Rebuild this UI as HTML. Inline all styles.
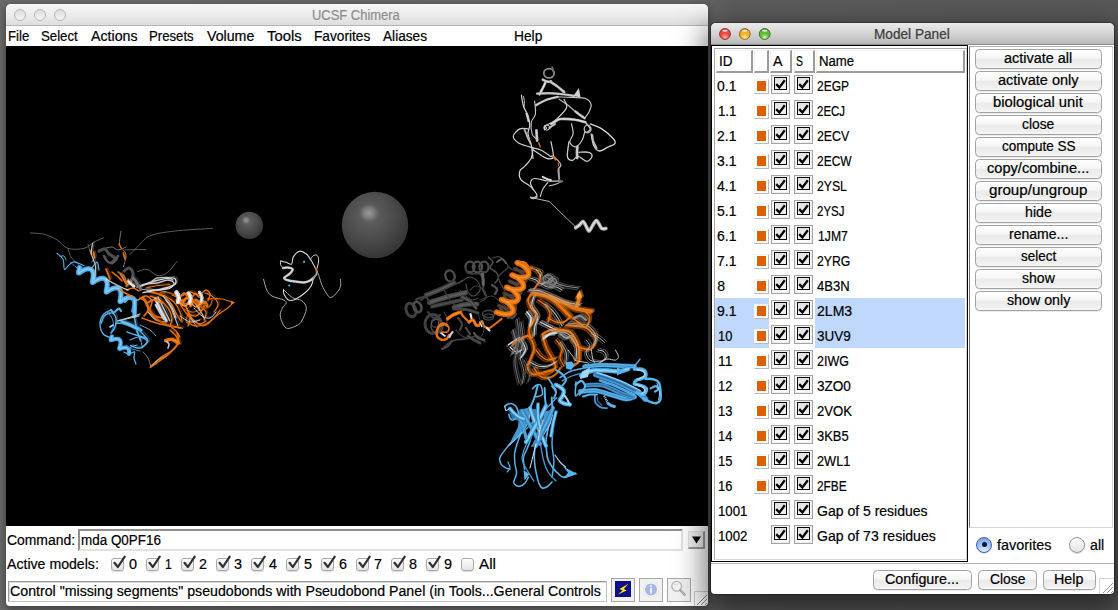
<!DOCTYPE html>
<html><head><meta charset="utf-8"><title>UCSF Chimera</title>
<style>
html,body{margin:0;padding:0;}
body{width:1118px;height:610px;overflow:hidden;position:relative;background:#5d5d5d;font-family:"Liberation Sans",sans-serif;}
.a{position:absolute;box-sizing:border-box;}
.t{position:absolute;white-space:pre;line-height:1;transform-origin:0 0;font-family:"Liberation Sans",sans-serif;-webkit-text-stroke:0.2px currentColor;}
#bg{left:0;top:0;width:1118px;height:610px;background:linear-gradient(90deg,#6a6a6a 0,#676767 690px,#5b5b5b 735px,#585858 100%);}
/* main window */
#w1{left:6px;top:4px;width:702px;height:602px;border-radius:5px 5px 4px 4px;background:#fff;box-shadow:0 3px 9px 1px rgba(0,0,0,.38);overflow:hidden;}
#w1 .tb{left:0;top:0;width:702px;height:22px;background:linear-gradient(#f7f7f7,#ececec 50%,#dedede);border-bottom:1px solid #b4b4b4;}
.tl{width:12px;height:12px;border-radius:50%;}
.tl.off{border:1px solid #b7b7b7;background:linear-gradient(#dcdcdc,#f4f4f4);}
#cv{left:0;top:42px;width:702px;height:480px;background:#000;}
/* model panel */
#w2{left:711px;top:23px;width:403px;height:571px;border-radius:5px 5px 4px 4px;background:#fff;box-shadow:0 12px 28px 8px rgba(0,0,0,.5),0 0 0 1px rgba(0,0,0,.3);}
#w2 .tb{left:0;top:0;width:403px;height:22px;border-radius:5px 5px 0 0;background:linear-gradient(#ebebeb,#d4d4d4 50%,#b8b8b8);border-bottom:1px solid #8c8c8c;}
.btn{border:1px solid #a2a2a2;border-radius:4.5px;background:linear-gradient(#ffffff 0,#f6f6f6 45%,#ebebeb 52%,#efefef 85%,#f8f8f8 100%);box-shadow:0 1px 0 rgba(0,0,0,.08);}
.hc{background:#fff;border-right:2px solid #9c9c9c;border-bottom:2px solid #9c9c9c;border-top:1px solid #f2f2f2;border-left:1px solid #f2f2f2;}
.cw{width:15px;height:15px;background:#fff;border-right:1px solid #b9b9b9;border-bottom:1px solid #b9b9b9;border-top:1px solid #f4f4f4;border-left:1px solid #f4f4f4;}
.cw i{position:absolute;left:2px;top:1.8px;width:9.8px;height:9.5px;background:#dc5f00;}
.cb{width:19px;height:19px;border:1px solid #a4a4a4;background:#fcfcfc;box-shadow:inset 0 0 0 1px #efefef;}
.cb i{position:absolute;left:2px;top:1px;width:13px;height:13px;box-sizing:border-box;border:1.4px solid #0a0a0a;background:linear-gradient(#e2e2e2,#efefef);}
.cb svg{position:absolute;left:2px;top:1px;}
.mcb{width:13px;height:13px;border:1px solid #a9a9a9;border-radius:3px;background:linear-gradient(#fdfdfd,#e4e4e4);box-shadow:0 1px 1px rgba(0,0,0,.15);}
.mcb svg{position:absolute;left:1px;top:-4px;}
</style></head><body>
<div id="bg" class="a"></div>
<!-- ================= main window ================= -->
<div id="w1" class="a">
 <div class="tb a"></div>
 <div class="tl off a" style="left:8.0px;top:5px"></div>
 <div class="tl off a" style="left:27.8px;top:5px"></div>
 <div class="tl off a" style="left:47.7px;top:5px"></div>
 <div id="cv" class="a"></div>
 <div class="a" style="left:72px;top:525px;width:605px;height:22px;background:#fff;border:2px solid #e1e1e1;border-top-color:#8f8f8f;border-left-color:#8f8f8f;"></div>
 <div class="a" style="left:682px;top:527px;width:17px;height:18px;background:#f2f2f2;border-top:1px solid #e4e4e4;border-left:1px solid #e4e4e4;border-right:2px solid #9b9b9b;border-bottom:2px solid #9b9b9b;"><svg width="14" height="15" style="position:absolute;left:0;top:0"><path d="M3 4.5h9L7.5 11.5z" fill="#000"/></svg></div>
 <div class="mcb a" style="left:104.5px;top:553.5px"><svg width="16" height="16" viewBox="0 0 16 16"><path d="M1.5 7.8L4.9 12 11.7 1.7" fill="none" stroke="#303030" stroke-width="2.2" stroke-linecap="round" stroke-linejoin="round"/></svg></div>
 <div class="mcb a" style="left:139.5px;top:553.5px"><svg width="16" height="16" viewBox="0 0 16 16"><path d="M1.5 7.8L4.9 12 11.7 1.7" fill="none" stroke="#303030" stroke-width="2.2" stroke-linecap="round" stroke-linejoin="round"/></svg></div>
 <div class="mcb a" style="left:174.5px;top:553.5px"><svg width="16" height="16" viewBox="0 0 16 16"><path d="M1.5 7.8L4.9 12 11.7 1.7" fill="none" stroke="#303030" stroke-width="2.2" stroke-linecap="round" stroke-linejoin="round"/></svg></div>
 <div class="mcb a" style="left:209.5px;top:553.5px"><svg width="16" height="16" viewBox="0 0 16 16"><path d="M1.5 7.8L4.9 12 11.7 1.7" fill="none" stroke="#303030" stroke-width="2.2" stroke-linecap="round" stroke-linejoin="round"/></svg></div>
 <div class="mcb a" style="left:244.5px;top:553.5px"><svg width="16" height="16" viewBox="0 0 16 16"><path d="M1.5 7.8L4.9 12 11.7 1.7" fill="none" stroke="#303030" stroke-width="2.2" stroke-linecap="round" stroke-linejoin="round"/></svg></div>
 <div class="mcb a" style="left:279.5px;top:553.5px"><svg width="16" height="16" viewBox="0 0 16 16"><path d="M1.5 7.8L4.9 12 11.7 1.7" fill="none" stroke="#303030" stroke-width="2.2" stroke-linecap="round" stroke-linejoin="round"/></svg></div>
 <div class="mcb a" style="left:314.5px;top:553.5px"><svg width="16" height="16" viewBox="0 0 16 16"><path d="M1.5 7.8L4.9 12 11.7 1.7" fill="none" stroke="#303030" stroke-width="2.2" stroke-linecap="round" stroke-linejoin="round"/></svg></div>
 <div class="mcb a" style="left:349.5px;top:553.5px"><svg width="16" height="16" viewBox="0 0 16 16"><path d="M1.5 7.8L4.9 12 11.7 1.7" fill="none" stroke="#303030" stroke-width="2.2" stroke-linecap="round" stroke-linejoin="round"/></svg></div>
 <div class="mcb a" style="left:384.5px;top:553.5px"><svg width="16" height="16" viewBox="0 0 16 16"><path d="M1.5 7.8L4.9 12 11.7 1.7" fill="none" stroke="#303030" stroke-width="2.2" stroke-linecap="round" stroke-linejoin="round"/></svg></div>
 <div class="mcb a" style="left:419.5px;top:553.5px"><svg width="16" height="16" viewBox="0 0 16 16"><path d="M1.5 7.8L4.9 12 11.7 1.7" fill="none" stroke="#303030" stroke-width="2.2" stroke-linecap="round" stroke-linejoin="round"/></svg></div>
 <div class="mcb a" style="left:454.5px;top:553.5px"></div>
 <div class="a" style="left:2px;top:577px;width:599px;height:21px;background:#fff;border:1px solid #9a9a9a;border-bottom-color:#c4c4c4;border-right-color:#c4c4c4;box-shadow:inset 1px 1px 0 #d8d8d8;"></div>
 <div class="a" style="left:605px;top:574px;width:24px;height:24px;background:#f1f1f1;border:1px solid #a8a8a8;"></div>
 <div class="a" style="left:633px;top:574px;width:24px;height:24px;background:#f1f1f1;border:1px solid #a8a8a8;"></div>
 <div class="a" style="left:661px;top:574px;width:24px;height:24px;background:#f1f1f1;border:1px solid #a8a8a8;"></div>
 <div class="a" style="left:609px;top:577px;width:16px;height:16px;background:#0d0d8a;"><svg width="16" height="16" viewBox="0 0 16 16" style="position:absolute;left:0;top:0"><path d="M13.4 2.8L4.4 8 7.6 9.4 2.8 13.6 11.8 9.4 8.8 8z" fill="#f8e800"/></svg></div>
 <svg class="a" style="left:634.7px;top:575.5px" width="20" height="20" viewBox="0 0 20 20"><circle cx="10" cy="9.5" r="8" fill="#e6e6e6"/><circle cx="10" cy="9.5" r="7.2" fill="#fafafa"/><circle cx="10" cy="9.5" r="6.1" fill="#a6b6e8"/><circle cx="10" cy="6.2" r="1.1" fill="#f6f8ff"/><rect x="9" y="8.1" width="2" height="5.2" fill="#f6f8ff"/></svg>
 <svg class="a" style="left:662px;top:574px" width="22" height="22" viewBox="0 0 22 22"><circle cx="8.7" cy="8.3" r="4.9" fill="#f3f3f3" stroke="#b4b4b4" stroke-width="1.3"/><path d="M12.4 12.2L16.6 16.6" stroke="#9c9c9c" stroke-width="2.3" stroke-linecap="round"/><path d="M12.9 12.7L16.2 16.2" stroke="#d8d8d8" stroke-width=".8" stroke-linecap="round"/><path d="M6 6.3h4" stroke="#cfcfcf" stroke-width=".9"/></svg>
 <div class="a" style="left:688px;top:587px;width:14px;height:15px;border-left:1px solid #d0d0d0;border-top:1px solid #d0d0d0;background:rgba(255,255,255,.25)"></div><svg class="a" style="left:688px;top:588px" width="14" height="14"><path d="M13 3L3 13M13 7L7 13M13 11L11 13" stroke="#8a8a8a" stroke-width="1"/></svg>
</div>
<!-- ================= model panel ================= -->
<div id="w2" class="a">
 <div class="tb a"></div>
 <svg class="a" style="left:0;top:0" width="80" height="22" viewBox="0 0 80 22"><defs><radialGradient id="tlr" cx=".5" cy=".82" r=".75"><stop offset="0" stop-color="#ffb3ae"/><stop offset=".5" stop-color="#ee4a44"/><stop offset=".88" stop-color="#ee4a44"/><stop offset="1" stop-color="#8f1f1c"/></radialGradient><radialGradient id="tly" cx=".5" cy=".82" r=".75"><stop offset="0" stop-color="#ffeea0"/><stop offset=".5" stop-color="#f0ae30"/><stop offset=".88" stop-color="#f0ae30"/><stop offset="1" stop-color="#96600e"/></radialGradient><radialGradient id="tlg" cx=".5" cy=".82" r=".75"><stop offset="0" stop-color="#d2f3b0"/><stop offset=".5" stop-color="#62ba3c"/><stop offset=".88" stop-color="#62ba3c"/><stop offset="1" stop-color="#2f6e18"/></radialGradient></defs><circle cx="14" cy="11" r="5.4" fill="url(#tlr)" stroke="#8f1f1c" stroke-width=".9"/><ellipse cx="14" cy="7.6" rx="2.7" ry="1.2" fill="#fff" opacity=".75"/><circle cx="33.8" cy="11" r="5.4" fill="url(#tly)" stroke="#96600e" stroke-width=".9"/><ellipse cx="33.8" cy="7.6" rx="2.7" ry="1.2" fill="#fff" opacity=".75"/><circle cx="53.7" cy="11" r="5.4" fill="url(#tlg)" stroke="#2f6e18" stroke-width=".9"/><ellipse cx="53.7" cy="7.6" rx="2.7" ry="1.2" fill="#fff" opacity=".75"/></svg>
 <div class="a" style="left:0;top:22px;width:257px;height:517px;border:1px solid #000;border-left-width:1.5px;background:#fff;"></div>
 <div class="a" style="left:2.5px;top:25px;width:253px;height:512px;border:1.5px solid #a9a9a9;border-right-color:#d6d6d6;border-bottom-color:#d6d6d6;background:#fff;"></div>
 <div class="hc a" style="left:5px;top:27px;width:37px;height:23px"></div>
 <div class="hc a" style="left:43px;top:27px;width:14.5px;height:23px"></div>
 <div class="hc a" style="left:58.5px;top:27px;width:22.5px;height:23px"></div>
 <div class="hc a" style="left:82.5px;top:27px;width:21.5px;height:23px"></div>
 <div class="hc a" style="left:105px;top:27px;width:148.5px;height:23px"></div>
 <div class="a" style="left:4px;top:275px;width:54px;height:50px;background:#bfd8fb"></div>
 <div class="a" style="left:104px;top:275px;width:149.5px;height:50px;background:#bfd8fb"></div>
 <div class="cw a" style="left:42.5px;top:55.5px"><i></i></div>
 <div class="cb a" style="left:60px;top:52px"><i></i><svg width="13" height="13" viewBox="0 0 13 13"><path d="M2.2 7.1L5.4 10.4 10.8 3.3" fill="none" stroke="#000" stroke-width="2.3" stroke-linejoin="miter"/></svg></div>
 <div class="cb a" style="left:83px;top:52px"><i></i><svg width="13" height="13" viewBox="0 0 13 13"><path d="M2.2 7.1L5.4 10.4 10.8 3.3" fill="none" stroke="#000" stroke-width="2.3" stroke-linejoin="miter"/></svg></div>
 <div class="cw a" style="left:42.5px;top:80.5px"><i></i></div>
 <div class="cb a" style="left:60px;top:77px"><i></i><svg width="13" height="13" viewBox="0 0 13 13"><path d="M2.2 7.1L5.4 10.4 10.8 3.3" fill="none" stroke="#000" stroke-width="2.3" stroke-linejoin="miter"/></svg></div>
 <div class="cb a" style="left:83px;top:77px"><i></i><svg width="13" height="13" viewBox="0 0 13 13"><path d="M2.2 7.1L5.4 10.4 10.8 3.3" fill="none" stroke="#000" stroke-width="2.3" stroke-linejoin="miter"/></svg></div>
 <div class="cw a" style="left:42.5px;top:105.5px"><i></i></div>
 <div class="cb a" style="left:60px;top:102px"><i></i><svg width="13" height="13" viewBox="0 0 13 13"><path d="M2.2 7.1L5.4 10.4 10.8 3.3" fill="none" stroke="#000" stroke-width="2.3" stroke-linejoin="miter"/></svg></div>
 <div class="cb a" style="left:83px;top:102px"><i></i><svg width="13" height="13" viewBox="0 0 13 13"><path d="M2.2 7.1L5.4 10.4 10.8 3.3" fill="none" stroke="#000" stroke-width="2.3" stroke-linejoin="miter"/></svg></div>
 <div class="cw a" style="left:42.5px;top:130.5px"><i></i></div>
 <div class="cb a" style="left:60px;top:127px"><i></i><svg width="13" height="13" viewBox="0 0 13 13"><path d="M2.2 7.1L5.4 10.4 10.8 3.3" fill="none" stroke="#000" stroke-width="2.3" stroke-linejoin="miter"/></svg></div>
 <div class="cb a" style="left:83px;top:127px"><i></i><svg width="13" height="13" viewBox="0 0 13 13"><path d="M2.2 7.1L5.4 10.4 10.8 3.3" fill="none" stroke="#000" stroke-width="2.3" stroke-linejoin="miter"/></svg></div>
 <div class="cw a" style="left:42.5px;top:155.5px"><i></i></div>
 <div class="cb a" style="left:60px;top:152px"><i></i><svg width="13" height="13" viewBox="0 0 13 13"><path d="M2.2 7.1L5.4 10.4 10.8 3.3" fill="none" stroke="#000" stroke-width="2.3" stroke-linejoin="miter"/></svg></div>
 <div class="cb a" style="left:83px;top:152px"><i></i><svg width="13" height="13" viewBox="0 0 13 13"><path d="M2.2 7.1L5.4 10.4 10.8 3.3" fill="none" stroke="#000" stroke-width="2.3" stroke-linejoin="miter"/></svg></div>
 <div class="cw a" style="left:42.5px;top:180.5px"><i></i></div>
 <div class="cb a" style="left:60px;top:177px"><i></i><svg width="13" height="13" viewBox="0 0 13 13"><path d="M2.2 7.1L5.4 10.4 10.8 3.3" fill="none" stroke="#000" stroke-width="2.3" stroke-linejoin="miter"/></svg></div>
 <div class="cb a" style="left:83px;top:177px"><i></i><svg width="13" height="13" viewBox="0 0 13 13"><path d="M2.2 7.1L5.4 10.4 10.8 3.3" fill="none" stroke="#000" stroke-width="2.3" stroke-linejoin="miter"/></svg></div>
 <div class="cw a" style="left:42.5px;top:205.5px"><i></i></div>
 <div class="cb a" style="left:60px;top:202px"><i></i><svg width="13" height="13" viewBox="0 0 13 13"><path d="M2.2 7.1L5.4 10.4 10.8 3.3" fill="none" stroke="#000" stroke-width="2.3" stroke-linejoin="miter"/></svg></div>
 <div class="cb a" style="left:83px;top:202px"><i></i><svg width="13" height="13" viewBox="0 0 13 13"><path d="M2.2 7.1L5.4 10.4 10.8 3.3" fill="none" stroke="#000" stroke-width="2.3" stroke-linejoin="miter"/></svg></div>
 <div class="cw a" style="left:42.5px;top:230.5px"><i></i></div>
 <div class="cb a" style="left:60px;top:227px"><i></i><svg width="13" height="13" viewBox="0 0 13 13"><path d="M2.2 7.1L5.4 10.4 10.8 3.3" fill="none" stroke="#000" stroke-width="2.3" stroke-linejoin="miter"/></svg></div>
 <div class="cb a" style="left:83px;top:227px"><i></i><svg width="13" height="13" viewBox="0 0 13 13"><path d="M2.2 7.1L5.4 10.4 10.8 3.3" fill="none" stroke="#000" stroke-width="2.3" stroke-linejoin="miter"/></svg></div>
 <div class="cw a" style="left:42.5px;top:255.5px"><i></i></div>
 <div class="cb a" style="left:60px;top:252px"><i></i><svg width="13" height="13" viewBox="0 0 13 13"><path d="M2.2 7.1L5.4 10.4 10.8 3.3" fill="none" stroke="#000" stroke-width="2.3" stroke-linejoin="miter"/></svg></div>
 <div class="cb a" style="left:83px;top:252px"><i></i><svg width="13" height="13" viewBox="0 0 13 13"><path d="M2.2 7.1L5.4 10.4 10.8 3.3" fill="none" stroke="#000" stroke-width="2.3" stroke-linejoin="miter"/></svg></div>
 <div class="cw a" style="left:42.5px;top:280.5px"><i></i></div>
 <div class="cb a" style="left:60px;top:277px"><i></i><svg width="13" height="13" viewBox="0 0 13 13"><path d="M2.2 7.1L5.4 10.4 10.8 3.3" fill="none" stroke="#000" stroke-width="2.3" stroke-linejoin="miter"/></svg></div>
 <div class="cb a" style="left:83px;top:277px"><i></i><svg width="13" height="13" viewBox="0 0 13 13"><path d="M2.2 7.1L5.4 10.4 10.8 3.3" fill="none" stroke="#000" stroke-width="2.3" stroke-linejoin="miter"/></svg></div>
 <div class="cw a" style="left:42.5px;top:305.5px"><i></i></div>
 <div class="cb a" style="left:60px;top:302px"><i></i><svg width="13" height="13" viewBox="0 0 13 13"><path d="M2.2 7.1L5.4 10.4 10.8 3.3" fill="none" stroke="#000" stroke-width="2.3" stroke-linejoin="miter"/></svg></div>
 <div class="cb a" style="left:83px;top:302px"><i></i><svg width="13" height="13" viewBox="0 0 13 13"><path d="M2.2 7.1L5.4 10.4 10.8 3.3" fill="none" stroke="#000" stroke-width="2.3" stroke-linejoin="miter"/></svg></div>
 <div class="cw a" style="left:42.5px;top:330.5px"><i></i></div>
 <div class="cb a" style="left:60px;top:327px"><i></i><svg width="13" height="13" viewBox="0 0 13 13"><path d="M2.2 7.1L5.4 10.4 10.8 3.3" fill="none" stroke="#000" stroke-width="2.3" stroke-linejoin="miter"/></svg></div>
 <div class="cb a" style="left:83px;top:327px"><i></i><svg width="13" height="13" viewBox="0 0 13 13"><path d="M2.2 7.1L5.4 10.4 10.8 3.3" fill="none" stroke="#000" stroke-width="2.3" stroke-linejoin="miter"/></svg></div>
 <div class="cw a" style="left:42.5px;top:355.5px"><i></i></div>
 <div class="cb a" style="left:60px;top:352px"><i></i><svg width="13" height="13" viewBox="0 0 13 13"><path d="M2.2 7.1L5.4 10.4 10.8 3.3" fill="none" stroke="#000" stroke-width="2.3" stroke-linejoin="miter"/></svg></div>
 <div class="cb a" style="left:83px;top:352px"><i></i><svg width="13" height="13" viewBox="0 0 13 13"><path d="M2.2 7.1L5.4 10.4 10.8 3.3" fill="none" stroke="#000" stroke-width="2.3" stroke-linejoin="miter"/></svg></div>
 <div class="cw a" style="left:42.5px;top:380.5px"><i></i></div>
 <div class="cb a" style="left:60px;top:377px"><i></i><svg width="13" height="13" viewBox="0 0 13 13"><path d="M2.2 7.1L5.4 10.4 10.8 3.3" fill="none" stroke="#000" stroke-width="2.3" stroke-linejoin="miter"/></svg></div>
 <div class="cb a" style="left:83px;top:377px"><i></i><svg width="13" height="13" viewBox="0 0 13 13"><path d="M2.2 7.1L5.4 10.4 10.8 3.3" fill="none" stroke="#000" stroke-width="2.3" stroke-linejoin="miter"/></svg></div>
 <div class="cw a" style="left:42.5px;top:405.5px"><i></i></div>
 <div class="cb a" style="left:60px;top:402px"><i></i><svg width="13" height="13" viewBox="0 0 13 13"><path d="M2.2 7.1L5.4 10.4 10.8 3.3" fill="none" stroke="#000" stroke-width="2.3" stroke-linejoin="miter"/></svg></div>
 <div class="cb a" style="left:83px;top:402px"><i></i><svg width="13" height="13" viewBox="0 0 13 13"><path d="M2.2 7.1L5.4 10.4 10.8 3.3" fill="none" stroke="#000" stroke-width="2.3" stroke-linejoin="miter"/></svg></div>
 <div class="cw a" style="left:42.5px;top:430.5px"><i></i></div>
 <div class="cb a" style="left:60px;top:427px"><i></i><svg width="13" height="13" viewBox="0 0 13 13"><path d="M2.2 7.1L5.4 10.4 10.8 3.3" fill="none" stroke="#000" stroke-width="2.3" stroke-linejoin="miter"/></svg></div>
 <div class="cb a" style="left:83px;top:427px"><i></i><svg width="13" height="13" viewBox="0 0 13 13"><path d="M2.2 7.1L5.4 10.4 10.8 3.3" fill="none" stroke="#000" stroke-width="2.3" stroke-linejoin="miter"/></svg></div>
 <div class="cw a" style="left:42.5px;top:455.5px"><i></i></div>
 <div class="cb a" style="left:60px;top:452px"><i></i><svg width="13" height="13" viewBox="0 0 13 13"><path d="M2.2 7.1L5.4 10.4 10.8 3.3" fill="none" stroke="#000" stroke-width="2.3" stroke-linejoin="miter"/></svg></div>
 <div class="cb a" style="left:83px;top:452px"><i></i><svg width="13" height="13" viewBox="0 0 13 13"><path d="M2.2 7.1L5.4 10.4 10.8 3.3" fill="none" stroke="#000" stroke-width="2.3" stroke-linejoin="miter"/></svg></div>
 <div class="cb a" style="left:60px;top:477px"><i></i><svg width="13" height="13" viewBox="0 0 13 13"><path d="M2.2 7.1L5.4 10.4 10.8 3.3" fill="none" stroke="#000" stroke-width="2.3" stroke-linejoin="miter"/></svg></div>
 <div class="cb a" style="left:83px;top:477px"><i></i><svg width="13" height="13" viewBox="0 0 13 13"><path d="M2.2 7.1L5.4 10.4 10.8 3.3" fill="none" stroke="#000" stroke-width="2.3" stroke-linejoin="miter"/></svg></div>
 <div class="cb a" style="left:60px;top:502px"><i></i><svg width="13" height="13" viewBox="0 0 13 13"><path d="M2.2 7.1L5.4 10.4 10.8 3.3" fill="none" stroke="#000" stroke-width="2.3" stroke-linejoin="miter"/></svg></div>
 <div class="cb a" style="left:83px;top:502px"><i></i><svg width="13" height="13" viewBox="0 0 13 13"><path d="M2.2 7.1L5.4 10.4 10.8 3.3" fill="none" stroke="#000" stroke-width="2.3" stroke-linejoin="miter"/></svg></div>
 <div class="a" style="left:258px;top:23px;width:144px;height:482px;border:1.5px solid #d4d4d4;border-top-color:#b0b0b0;border-left-color:#6e6e6e;background:#fff"></div>
 <div class="btn a" style="left:264px;top:25.5px;width:127px;height:20px"></div>
 <div class="btn a" style="left:264px;top:47.5px;width:127px;height:20px"></div>
 <div class="btn a" style="left:264px;top:69.5px;width:127px;height:20px"></div>
 <div class="btn a" style="left:264px;top:91.5px;width:127px;height:20px"></div>
 <div class="btn a" style="left:264px;top:113.5px;width:127px;height:20px"></div>
 <div class="btn a" style="left:264px;top:135.5px;width:127px;height:20px"></div>
 <div class="btn a" style="left:264px;top:157.5px;width:127px;height:20px"></div>
 <div class="btn a" style="left:264px;top:179.5px;width:127px;height:20px"></div>
 <div class="btn a" style="left:264px;top:201.5px;width:127px;height:20px"></div>
 <div class="btn a" style="left:264px;top:223.5px;width:127px;height:20px"></div>
 <div class="btn a" style="left:264px;top:245.5px;width:127px;height:20px"></div>
 <div class="btn a" style="left:264px;top:267.5px;width:127px;height:20px"></div>
 <div class="a" style="left:265px;top:513.8px;width:16px;height:16px;border-radius:50%;border:1px solid #4660a6;background:radial-gradient(circle at 50% 95%,#e2f0ff 0,#a8c8f8 45%,#7398e4 100%);box-shadow:0 1px 1px rgba(0,0,0,.15)"><div class="a" style="left:4.5px;top:4.3px;width:5px;height:5px;border-radius:50%;background:#0b1630"></div></div>
 <div class="a" style="left:358px;top:513.8px;width:16px;height:16px;border-radius:50%;border:1px solid #949494;background:linear-gradient(#ffffff,#e2e2e2);box-shadow:0 1px 1px rgba(0,0,0,.15)"></div>
 <div class="a" style="left:0;top:539.5px;width:403px;height:1.5px;background:#b5b5b5"></div>
 <div class="btn a" style="left:162.3px;top:546.5px;width:98.3px;height:20.5px"></div>
 <div class="btn a" style="left:267.2px;top:546.5px;width:58.6px;height:20.5px"></div>
 <div class="btn a" style="left:332.2px;top:546.5px;width:52.4px;height:20.5px"></div>
 <div class="a" style="left:388px;top:555px;width:15px;height:16px;border-left:1px solid #d6d6d6;border-top:1px solid #d6d6d6;border-radius:0 0 4px 0"></div><svg class="a" style="left:389px;top:557px" width="14" height="14"><path d="M13 3L3 13M13 7L7 13M13 11L11 13" stroke="#9a9a9a" stroke-width="1"/></svg>
</div>
<!-- ================= 3D scene ================= -->
<svg class="a" style="left:0;top:0" width="1118" height="610" viewBox="0 0 1118 610">
<defs>
<clipPath id="cvclip"><rect x="6" y="46" width="702" height="480"/></clipPath>
<radialGradient id="sphA" cx="0.42" cy="0.36" r="0.75"><stop offset="0" stop-color="#646464"/><stop offset="0.5" stop-color="#4a4a4a"/><stop offset="0.85" stop-color="#363636"/><stop offset="1" stop-color="#262626"/></radialGradient>
<radialGradient id="sphH" cx="0.5" cy="0.5" r="0.5"><stop offset="0" stop-color="#9a9a9a" stop-opacity="1"/><stop offset="0.55" stop-color="#858585" stop-opacity=".75"/><stop offset="1" stop-color="#707070" stop-opacity="0"/></radialGradient>
</defs>
<g clip-path="url(#cvclip)">
<circle cx="249.3" cy="225.4" r="13.7" fill="url(#sphA)"/>
<ellipse cx="246" cy="220.2" rx="4.6" ry="4.2" fill="url(#sphH)"/>
<circle cx="375" cy="225" r="33.2" fill="url(#sphA)"/>
<ellipse cx="369" cy="213" rx="10.5" ry="9.5" fill="url(#sphH)"/>
<path d="M263.6 279.3C264.1 281.1 265.3 287.0 266.7 289.8C268.1 292.6 269.2 294.4 272.1 296.1C275.0 297.8 281.5 298.8 283.8 300.0C286.1 301.2 286.3 301.9 286.2 303.1C286.1 304.3 284.0 305.1 283.0 307.0C282.0 308.9 280.2 311.9 280.2 314.8C280.2 317.7 281.8 321.8 283.0 324.1C284.2 326.4 285.3 328.3 287.7 328.5C290.1 328.7 294.8 326.6 297.1 325.4C299.4 324.1 300.1 323.8 301.7 321.0C303.2 318.2 306.4 311.9 306.4 308.5C306.4 305.1 304.0 302.5 301.7 300.7C299.4 298.9 295.4 299.5 292.4 297.6C289.4 295.7 285.0 290.9 283.5 289.5" fill="none" stroke="#a9a9a9" stroke-width="1.0" stroke-linecap="round" stroke-linejoin="round"/>
<path d="M283.5 289.5C283.6 290.2 283.0 291.9 283.8 293.7C284.6 295.4 286.6 299.1 288.5 300.0C290.4 300.9 292.8 300.4 295.5 299.2C298.2 298.0 302.2 295.2 304.8 293.0C307.4 290.8 309.7 288.5 311.1 286.0C312.5 283.5 313.0 279.5 313.4 278.2" fill="none" stroke="#d8d8d8" stroke-width="1.1" stroke-linecap="round" stroke-linejoin="round"/>
<path d="M280.7 261.0C281.6 261.2 284.2 261.8 286.0 262.3C287.8 262.8 290.4 265.0 291.6 264.1C292.8 263.2 291.9 259.2 293.2 257.1C294.5 255.0 297.2 251.7 299.4 251.2C301.6 250.7 304.4 252.5 306.4 254.0C308.3 255.5 309.4 257.5 311.1 260.2C312.8 262.9 315.6 268.7 316.5 270.4" fill="none" stroke="#d8d8d8" stroke-width="1.1" stroke-linecap="round" stroke-linejoin="round"/>
<path d="M280.7 261.0C280.7 261.6 280.1 263.3 280.5 264.5C280.9 265.7 282.6 267.4 283.0 268.0" fill="none" stroke="#d8d8d8" stroke-width="1.0" stroke-linecap="round" stroke-linejoin="round"/>
<path d="M310.3 259.5C310.8 258.9 312.2 256.2 313.4 255.6C314.6 254.9 316.4 254.7 317.3 255.6C318.2 256.5 318.7 258.5 318.6 261.0C318.5 263.5 316.9 268.8 316.5 270.4" fill="none" stroke="#d8d8d8" stroke-width="1.0" stroke-linecap="round" stroke-linejoin="round"/>
<path d="M316.5 270.4C316.9 271.3 318.0 273.3 318.9 275.8C319.8 278.3 320.7 282.2 322.0 285.2C323.3 288.2 325.3 291.6 326.7 293.7C328.1 295.8 328.9 297.6 330.5 297.6C332.1 297.6 334.4 295.5 336.0 293.7C337.6 291.9 339.7 289.1 340.4 286.7C341.1 284.3 340.4 280.5 340.4 279.3" fill="none" stroke="#a9a9a9" stroke-width="1.0" stroke-linecap="round" stroke-linejoin="round"/>
<path d="M283.0 268.0C283.8 267.9 286.4 267.4 288.0 267.6C289.6 267.8 292.3 268.2 292.6 269.2C292.9 270.2 291.4 272.1 290.0 273.5C288.6 274.9 284.5 276.7 284.2 277.8C283.9 278.9 286.1 279.7 288.0 280.3C289.9 280.9 292.8 281.1 295.5 281.5C298.2 281.9 301.6 282.5 304.0 282.4C306.4 282.2 308.4 281.4 310.0 280.6C311.6 279.8 313.0 278.3 313.6 277.8" fill="none" stroke="#b4b4b4" stroke-width="2.5" stroke-linecap="round" stroke-linejoin="round"/>
<path d="M283.0 268.0C283.8 267.9 286.4 267.4 288.0 267.6C289.6 267.8 292.3 268.2 292.6 269.2C292.9 270.2 291.4 272.1 290.0 273.5C288.6 274.9 284.5 276.7 284.2 277.8C283.9 278.9 286.1 279.7 288.0 280.3C289.9 280.9 292.8 281.1 295.5 281.5C298.2 281.9 301.6 282.5 304.0 282.4C306.4 282.2 308.4 281.4 310.0 280.6C311.6 279.8 313.0 278.3 313.6 277.8" fill="none" stroke="#ececec" stroke-width="0.875" stroke-linecap="round" stroke-linejoin="round"/>
<path d="M313.4 278.2C313.9 277.5 315.9 275.2 316.5 274.0C317.1 272.8 316.8 271.5 316.8 271.0" fill="none" stroke="#9a9a9a" stroke-width="2.0" stroke-linecap="round" stroke-linejoin="round"/>
<circle cx="304.1" cy="261.8" r="1.1" fill="#3fc7f0"/>
<circle cx="289.3" cy="285.5" r="1.1" fill="#3fc7f0"/>
<path d="M315.2 267.5 L316.6 270.8" fill="none" stroke="#e86a10" stroke-width="1.6" stroke-linecap="round" stroke-linejoin="round"/>
<ellipse cx="549" cy="73.2" rx="5.2" ry="4.6" fill="none" stroke="#8e8e8e" stroke-width="1.8"/>
<path d="M551.5 66.5q2.5 2 1.5 6" fill="none" stroke="#6a6a6a" stroke-width="1.6"/>
<path d="M542.8 79.7C543.5 80.0 545.6 81.3 547.0 81.6C548.4 81.9 550.3 81.3 551.0 81.3" fill="none" stroke="#b5b5b5" stroke-width="2.6" stroke-linecap="round" stroke-linejoin="round"/>
<path d="M542.8 79.7C543.5 80.0 545.6 81.3 547.0 81.6C548.4 81.9 550.3 81.3 551.0 81.3" fill="none" stroke="#e6e6e6" stroke-width="0.9099999999999999" stroke-linecap="round" stroke-linejoin="round"/>
<path d="M545.2 83.0C544.8 83.9 543.6 86.6 542.6 88.5C541.6 90.4 540.0 93.4 539.5 94.4" fill="none" stroke="#bdbdbd" stroke-width="2.6" stroke-linecap="round" stroke-linejoin="round"/>
<path d="M545.2 83.0C544.8 83.9 543.6 86.6 542.6 88.5C541.6 90.4 540.0 93.4 539.5 94.4" fill="none" stroke="#efefef" stroke-width="0.9099999999999999" stroke-linecap="round" stroke-linejoin="round"/>
<path d="M551.0 82.1C552.1 82.8 555.3 84.8 557.5 86.5C559.7 88.2 563.0 91.1 564.1 92.0" fill="none" stroke="#b0b0b0" stroke-width="2.8" stroke-linecap="round" stroke-linejoin="round"/>
<path d="M551.0 82.1C552.1 82.8 555.3 84.8 557.5 86.5C559.7 88.2 563.0 91.1 564.1 92.0" fill="none" stroke="#e0e0e0" stroke-width="0.9799999999999999" stroke-linecap="round" stroke-linejoin="round"/>
<path d="M537.0 93.6C539.2 93.5 545.5 93.1 550.0 93.2C554.5 93.3 560.1 94.0 564.1 94.4C568.1 94.8 572.3 95.6 573.9 95.8" fill="none" stroke="#a8a8a8" stroke-width="2.4" stroke-linecap="round" stroke-linejoin="round"/>
<path d="M537.0 93.6C539.2 93.5 545.5 93.1 550.0 93.2C554.5 93.3 560.1 94.0 564.1 94.4C568.1 94.8 572.3 95.6 573.9 95.8" fill="none" stroke="#dddddd" stroke-width="0.84" stroke-linecap="round" stroke-linejoin="round"/>
<polygon points="573.2,96.2 578.9,87.9 580.5,97.2" fill="#d0d0d0"/>
<path d="M536.2 105.1C537.8 104.2 542.5 101.4 546.0 100.0C549.5 98.6 555.6 97.4 557.5 96.9" fill="none" stroke="#b2b2b2" stroke-width="2.4" stroke-linecap="round" stroke-linejoin="round"/>
<path d="M536.2 105.1C537.8 104.2 542.5 101.4 546.0 100.0C549.5 98.6 555.6 97.4 557.5 96.9" fill="none" stroke="#e4e4e4" stroke-width="0.84" stroke-linecap="round" stroke-linejoin="round"/>
<path d="M557.5 96.9C559.9 97.0 567.4 97.1 572.0 97.4C576.6 97.7 582.2 97.3 585.4 98.5C588.6 99.7 590.5 102.0 591.1 104.3C591.7 106.6 589.8 110.2 588.7 112.5C587.6 114.8 585.3 117.2 584.6 118.2" fill="none" stroke="#c4c4c4" stroke-width="1.2" stroke-linecap="round" stroke-linejoin="round"/>
<path d="M584.6 118.2C583.4 117.4 579.8 115.3 577.2 113.3C574.6 111.2 572.0 108.2 569.0 105.9C566.0 103.6 560.8 100.4 559.2 99.3" fill="none" stroke="#b4b4b4" stroke-width="1.3" stroke-linecap="round" stroke-linejoin="round"/>
<path d="M575.5 111.5C576.2 112.1 578.5 113.9 580.0 115.0C581.5 116.1 583.8 117.7 584.6 118.2" fill="none" stroke="#b9b9b9" stroke-width="2.4" stroke-linecap="round" stroke-linejoin="round"/>
<path d="M575.5 111.5C576.2 112.1 578.5 113.9 580.0 115.0C581.5 116.1 583.8 117.7 584.6 118.2" fill="none" stroke="#e2e2e2" stroke-width="0.84" stroke-linecap="round" stroke-linejoin="round"/>
<path d="M564.1 99.3C564.5 100.7 567.4 104.6 566.6 107.5C565.8 110.4 561.5 114.1 559.2 116.6C556.9 119.1 554.9 120.8 552.6 122.3C550.3 123.8 546.6 124.4 545.2 125.6C543.8 126.8 544.5 129.0 544.4 129.7" fill="none" stroke="#d2d2d2" stroke-width="1.2" stroke-linecap="round" stroke-linejoin="round"/>
<path d="M521.5 95.2C521.6 96.2 521.9 99.0 522.3 101.0C522.7 103.0 522.9 105.0 523.9 107.5C524.9 110.0 527.0 112.7 528.0 115.7C529.0 118.7 529.7 122.6 529.7 125.6C529.7 128.6 527.7 130.5 528.0 133.8C528.3 137.1 530.5 141.1 531.3 145.2C532.1 149.3 532.7 156.2 533.0 158.4" fill="none" stroke="#d6d6d6" stroke-width="1.2" stroke-linecap="round" stroke-linejoin="round"/>
<path d="M523.6 96.5C523.7 97.4 524.4 100.2 524.4 102.0C524.4 103.8 524.0 106.6 523.9 107.5" fill="none" stroke="#cfcfcf" stroke-width="1.0" stroke-linecap="round" stroke-linejoin="round"/>
<path d="M526.5 113.5C526.7 114.2 527.5 116.8 527.8 118.0C528.1 119.2 528.4 120.5 528.5 121.0" fill="none" stroke="#bcbcbc" stroke-width="2.2" stroke-linecap="round" stroke-linejoin="round"/>
<path d="M526.5 113.5C526.7 114.2 527.5 116.8 527.8 118.0C528.1 119.2 528.4 120.5 528.5 121.0" fill="none" stroke="#e6e6e6" stroke-width="0.8" stroke-linecap="round" stroke-linejoin="round"/>
<path d="M534.6 101.0C534.7 103.2 536.0 110.5 535.4 114.1C534.8 117.6 531.8 119.0 531.3 122.3C530.8 125.6 531.3 131.1 532.1 133.8C532.9 136.5 535.5 137.9 536.2 138.7" fill="none" stroke="#c6c6c6" stroke-width="1.1" stroke-linecap="round" stroke-linejoin="round"/>
<path d="M528.0 128.9C526.6 128.9 522.2 127.7 519.8 128.9C517.3 130.1 513.6 133.9 513.3 136.2C513.0 138.5 515.5 141.0 518.2 142.8C520.9 144.6 525.9 145.7 529.7 146.9C533.5 148.1 537.6 148.6 541.1 150.2C544.6 151.8 549.4 155.6 551.0 156.7" fill="none" stroke="#d0d0d0" stroke-width="1.2" stroke-linecap="round" stroke-linejoin="round"/>
<path d="M524.5 129.5C525.0 130.8 526.5 134.7 527.5 137.0C528.5 139.3 530.0 142.4 530.5 143.5" fill="none" stroke="#9c9c9c" stroke-width="2.0" stroke-linecap="round" stroke-linejoin="round"/>
<path d="M524.5 129.5C525.0 130.8 526.5 134.7 527.5 137.0C528.5 139.3 530.0 142.4 530.5 143.5" fill="none" stroke="#c8c8c8" stroke-width="0.8" stroke-linecap="round" stroke-linejoin="round"/>
<path d="M551.0 123.9C551.8 123.4 554.4 121.8 556.0 121.0C557.6 120.2 557.5 119.2 560.8 119.0C564.1 118.8 571.5 119.2 575.6 119.8C579.7 120.3 583.8 121.9 585.4 122.3" fill="none" stroke="#b9b9b9" stroke-width="2.6" stroke-linecap="round" stroke-linejoin="round"/>
<path d="M551.0 123.9C551.8 123.4 554.4 121.8 556.0 121.0C557.6 120.2 557.5 119.2 560.8 119.0C564.1 118.8 571.5 119.2 575.6 119.8C579.7 120.3 583.8 121.9 585.4 122.3" fill="none" stroke="#ebebeb" stroke-width="0.9099999999999999" stroke-linecap="round" stroke-linejoin="round"/>
<path d="M585.4 122.3C586.2 123.4 590.0 127.3 590.3 128.9C590.6 130.5 588.0 131.6 587.0 132.1C586.0 132.6 585.0 132.1 584.6 132.1" fill="none" stroke="#c8c8c8" stroke-width="1.3" stroke-linecap="round" stroke-linejoin="round"/>
<ellipse cx="587.6" cy="129" rx="3.4" ry="3.8" fill="none" stroke="#bdbdbd" stroke-width="1.3"/>
<path d="M590.3 123.9C592.2 124.7 598.0 126.4 601.8 128.9C605.6 131.4 611.1 136.2 613.3 138.7C615.5 141.1 615.7 142.2 614.9 143.6C614.1 145.0 611.0 145.7 608.4 146.9C605.8 148.1 601.8 151.3 599.3 151.0C596.8 150.7 595.0 148.1 593.6 145.2C592.2 142.3 591.5 135.7 591.1 133.8" fill="none" stroke="#d4d4d4" stroke-width="1.3" stroke-linecap="round" stroke-linejoin="round"/>
<path d="M592.2 135.0C592.4 136.0 592.5 138.8 593.2 141.0C593.9 143.2 596.0 146.8 596.5 148.0" fill="none" stroke="#bdbdbd" stroke-width="2.0" stroke-linecap="round" stroke-linejoin="round"/>
<path d="M571.5 123.9C571.8 125.6 573.4 130.8 573.1 133.8C572.8 136.8 569.4 139.8 569.8 142.0C570.2 144.2 573.5 147.2 575.6 146.9C577.7 146.6 580.6 142.8 582.1 140.3C583.6 137.8 584.2 133.5 584.6 132.1" fill="none" stroke="#c9c9c9" stroke-width="1.2" stroke-linecap="round" stroke-linejoin="round"/>
<path d="M536.4 130.5C536.5 131.2 536.6 133.3 536.7 135.0C536.8 136.7 537.1 139.6 537.2 140.5" fill="none" stroke="#b5b5b5" stroke-width="2.8" stroke-linecap="round" stroke-linejoin="round"/>
<path d="M536.4 130.5C536.5 131.2 536.6 133.3 536.7 135.0C536.8 136.7 537.1 139.6 537.2 140.5" fill="none" stroke="#dedede" stroke-width="0.9799999999999999" stroke-linecap="round" stroke-linejoin="round"/>
<path d="M538.7 142.8 L540.3 146.9" fill="none" stroke="#e86a10" stroke-width="1.4" stroke-linecap="round" stroke-linejoin="round"/>
<path d="M549.5 128.0C549.9 127.7 551.1 126.7 552.0 126.0C552.9 125.3 554.5 124.3 555.0 124.0" fill="none" stroke="#ababab" stroke-width="2.2" stroke-linecap="round" stroke-linejoin="round"/>
<path d="M549.5 128.0C549.9 127.7 551.1 126.7 552.0 126.0C552.9 125.3 554.5 124.3 555.0 124.0" fill="none" stroke="#dadada" stroke-width="0.8" stroke-linecap="round" stroke-linejoin="round"/>
<path d="M544.4 129.7C544.8 129.5 546.4 128.9 546.5 128.3C546.6 127.7 545.1 126.4 544.8 126.0" fill="none" stroke="#d6d6d6" stroke-width="1.1" stroke-linecap="round" stroke-linejoin="round"/>
<ellipse cx="546.8" cy="127.6" rx="3" ry="2.5" fill="none" stroke="#d0d0d0" stroke-width="1"/>
<path d="M569.0 141.6C568.7 144.1 566.9 153.2 567.4 156.4C567.9 159.6 570.5 160.5 572.3 160.5C574.1 160.5 575.5 156.3 578.0 156.4C580.5 156.5 584.7 161.3 587.0 161.3C589.3 161.3 591.7 157.9 592.0 156.4C592.3 154.9 590.9 153.0 588.7 152.3C586.5 151.6 580.5 152.3 578.9 152.3" fill="none" stroke="#cdcdcd" stroke-width="1.3" stroke-linecap="round" stroke-linejoin="round"/>
<path d="M577.4 146.6C577.3 147.5 577.0 150.1 577.0 152.0C577.0 153.9 577.2 157.0 577.2 158.0" fill="none" stroke="#b5b5b5" stroke-width="2.8" stroke-linecap="round" stroke-linejoin="round"/>
<path d="M577.4 146.6C577.3 147.5 577.0 150.1 577.0 152.0C577.0 153.9 577.2 157.0 577.2 158.0" fill="none" stroke="#e4e4e4" stroke-width="0.9799999999999999" stroke-linecap="round" stroke-linejoin="round"/>
<path d="M533.0 148.2C532.7 149.8 532.7 155.0 531.3 158.0C529.9 161.0 526.7 164.0 524.8 166.2C522.9 168.4 520.5 168.9 519.8 171.1C519.1 173.3 519.1 176.8 520.7 179.3C522.4 181.8 527.7 184.2 529.7 185.9C531.8 187.6 531.8 187.7 533.0 189.2C534.2 190.7 536.7 193.5 537.0 194.9C537.3 196.3 535.7 197.0 534.6 197.4C533.5 197.8 531.2 197.4 530.5 197.4" fill="none" stroke="#d5d5d5" stroke-width="1.2" stroke-linecap="round" stroke-linejoin="round"/>
<path d="M533.0 149.8C534.6 150.9 540.1 154.9 542.8 156.4C545.5 157.9 547.5 158.9 549.3 158.9C551.1 158.9 553.1 159.3 553.4 156.4C553.7 153.5 551.4 144.1 551.0 141.6" fill="none" stroke="#d2d2d2" stroke-width="1.2" stroke-linecap="round" stroke-linejoin="round"/>
<path d="M551.0 156.7C551.4 156.6 551.8 155.1 553.4 156.4C555.0 157.7 560.0 162.4 560.8 164.6C561.6 166.8 558.7 166.8 558.4 169.5C558.1 172.2 559.1 179.1 559.2 181.0" fill="none" stroke="#c8c8c8" stroke-width="1.2" stroke-linecap="round" stroke-linejoin="round"/>
<path d="M552.6 155.9 L555.5 160.0" fill="none" stroke="#e86a10" stroke-width="1.4" stroke-linecap="round" stroke-linejoin="round"/>
<path d="M558.2 163.0 L558.8 166.0" fill="none" stroke="#e86a10" stroke-width="1.2" stroke-linecap="round" stroke-linejoin="round"/>
<path d="M558.6 168.5C558.6 169.4 558.7 172.4 558.8 174.0C558.9 175.6 559.1 177.3 559.2 178.0" fill="none" stroke="#8f8f8f" stroke-width="2.0" stroke-linecap="round" stroke-linejoin="round"/>
<path d="M558.6 168.5C558.6 169.4 558.7 172.4 558.8 174.0C558.9 175.6 559.1 177.3 559.2 178.0" fill="none" stroke="#b9b9b9" stroke-width="0.8" stroke-linecap="round" stroke-linejoin="round"/>
<path d="M559.2 181.0C557.3 181.0 551.8 181.4 547.7 181.0C543.6 180.6 537.5 178.2 534.6 178.5C531.7 178.8 530.8 180.8 530.5 182.6C530.2 184.4 532.6 188.1 533.0 189.2" fill="none" stroke="#d0d0d0" stroke-width="1.2" stroke-linecap="round" stroke-linejoin="round"/>
<path d="M547.7 182.6C546.9 183.7 544.0 186.9 542.8 189.2C541.6 191.5 540.7 195.4 540.3 196.6" fill="none" stroke="#cccccc" stroke-width="1.1" stroke-linecap="round" stroke-linejoin="round"/>
<path d="M542.8 176.9C543.5 177.2 545.6 178.4 547.0 179.0C548.4 179.6 550.3 180.0 551.0 180.2" fill="none" stroke="#c2c2c2" stroke-width="2.2" stroke-linecap="round" stroke-linejoin="round"/>
<path d="M542.8 176.9C543.5 177.2 545.6 178.4 547.0 179.0C548.4 179.6 550.3 180.0 551.0 180.2" fill="none" stroke="#f0f0f0" stroke-width="0.8" stroke-linecap="round" stroke-linejoin="round"/>
<path d="M549.3 185.9C550.7 185.5 555.3 184.2 557.5 183.4C559.7 182.6 561.7 181.4 562.5 181.0" fill="none" stroke="#c8c8c8" stroke-width="1.1" stroke-linecap="round" stroke-linejoin="round"/>
<polygon points="559.0,178.5 563.5,182.0 559.6,183.2" fill="#6e6e6e"/>
<path d="M530.5 197.4C530.9 197.6 531.9 198.7 533.0 198.6C534.1 198.5 536.3 197.3 537.0 197.0" fill="none" stroke="#d6d6d6" stroke-width="1.3" stroke-linecap="round" stroke-linejoin="round"/>
<path d="M534.0 198.2 L536.5 198.0" fill="none" stroke="#e86a10" stroke-width="1.0" stroke-linecap="round" stroke-linejoin="round"/>
<path d="M530.5 197.4 L549.3 201.5" fill="none" stroke="#bdbdbd" stroke-width="1.0" stroke-linecap="round" stroke-linejoin="round"/>
<path d="M549.3 201.5 L575.6 226.9" fill="none" stroke="#a5a5a5" stroke-width="1.0" stroke-linecap="round" stroke-linejoin="round"/>
<path d="M575.6 227.7C576.2 227.2 578.3 226.1 579.5 225.0C580.7 223.9 582.0 221.2 583.0 221.3C584.0 221.4 584.8 223.9 585.8 225.5C586.8 227.1 587.8 231.0 588.9 231.0C590.0 231.0 591.4 227.2 592.6 225.5C593.8 223.8 595.0 220.8 596.1 220.5C597.2 220.2 598.0 222.7 599.0 224.0C600.0 225.3 600.6 227.8 601.8 228.5C602.9 229.2 605.2 228.5 605.9 228.5" fill="none" stroke="#858585" stroke-width="3.8" stroke-linecap="round" stroke-linejoin="round"/>
<path d="M575.6 227.7C576.2 227.2 578.3 226.1 579.5 225.0C580.7 223.9 582.0 221.2 583.0 221.3C584.0 221.4 584.8 223.9 585.8 225.5C586.8 227.1 587.8 231.0 588.9 231.0C590.0 231.0 591.4 227.2 592.6 225.5C593.8 223.8 595.0 220.8 596.1 220.5C597.2 220.2 598.0 222.7 599.0 224.0C600.0 225.3 600.6 227.8 601.8 228.5C602.9 229.2 605.2 228.5 605.9 228.5" fill="none" stroke="#bdbdbd" stroke-width="2.8" stroke-linecap="round" stroke-linejoin="round"/>
<path d="M575.6 227.7C576.2 227.2 578.3 226.1 579.5 225.0C580.7 223.9 582.0 221.2 583.0 221.3C584.0 221.4 584.8 223.9 585.8 225.5C586.8 227.1 587.8 231.0 588.9 231.0C590.0 231.0 591.4 227.2 592.6 225.5C593.8 223.8 595.0 220.8 596.1 220.5C597.2 220.2 598.0 222.7 599.0 224.0C600.0 225.3 600.6 227.8 601.8 228.5C602.9 229.2 605.2 228.5 605.9 228.5" fill="none" stroke="#f4f4f4" stroke-width="0.9799999999999999" stroke-linecap="round" stroke-linejoin="round"/>
<path d="M30.4 232.9C32.8 233.2 40.3 233.2 44.7 234.4C49.1 235.6 53.1 237.5 57.0 239.8C60.9 242.1 63.5 247.0 68.0 248.4C72.5 249.8 79.7 249.4 84.0 248.4C88.3 247.4 90.6 244.0 93.9 242.2C97.2 240.4 102.1 238.5 103.7 237.8" fill="none" stroke="#5e5e5e" stroke-width="1.0" stroke-linecap="round" stroke-linejoin="round"/>
<path d="M68.0 248.4C68.6 250.0 69.3 254.9 71.8 258.2C74.3 261.5 81.0 266.4 82.8 268.0" fill="none" stroke="#5e5e5e" stroke-width="1.0" stroke-linecap="round" stroke-linejoin="round"/>
<path d="M121.0 231.2C120.8 233.4 118.9 240.8 119.7 244.7C120.5 248.6 125.3 250.8 125.9 254.5C126.5 258.2 123.8 264.8 123.4 266.8" fill="none" stroke="#7a7a7a" stroke-width="1.0" stroke-linecap="round" stroke-linejoin="round"/>
<path d="M88.0 244.0C88.3 245.2 89.0 249.0 90.0 251.0C91.0 253.0 93.7 254.2 94.0 256.0C94.3 257.8 92.3 261.0 92.0 262.0" fill="none" stroke="#5e5e5e" stroke-width="1.0" stroke-linecap="round" stroke-linejoin="round"/>
<path d="M130.0 254.5C131.2 253.3 134.0 250.2 137.3 247.1C140.6 244.0 143.4 238.7 149.6 236.0C155.8 233.3 163.8 232.4 174.2 231.1C184.6 229.8 206.0 228.8 212.3 228.4" fill="none" stroke="#5e5e5e" stroke-width="1.0" stroke-linecap="round" stroke-linejoin="round"/>
<path d="M125.0 250.0C126.6 249.9 131.3 249.7 134.8 249.6C138.3 249.5 144.1 249.6 145.9 249.6" fill="none" stroke="#5e5e5e" stroke-width="1.0" stroke-linecap="round" stroke-linejoin="round"/>
<path d="M137.3 271.7C138.9 271.3 143.7 268.7 147.0 269.3C150.3 269.9 153.7 274.8 157.0 275.4C160.3 276.0 163.5 275.3 166.8 273.0C170.1 270.7 175.3 263.3 177.0 261.4" fill="none" stroke="#5e5e5e" stroke-width="1.0" stroke-linecap="round" stroke-linejoin="round"/>
<path d="M103.0 249.0C104.5 248.7 109.5 246.8 112.0 247.0C114.5 247.2 115.7 250.0 118.0 250.0C120.3 250.0 124.7 247.5 126.0 247.0" fill="none" stroke="#7a7a7a" stroke-width="1.0" stroke-linecap="round" stroke-linejoin="round"/>
<path d="M99.0 251.0C100.0 250.7 103.3 248.5 105.0 249.0C106.7 249.5 107.3 252.5 109.0 254.0C110.7 255.5 114.5 256.5 115.0 258.0C115.5 259.5 112.5 262.2 112.0 263.0" fill="none" stroke="#4c4c4c" stroke-width="3.2" stroke-linecap="round" stroke-linejoin="round"/>
<path d="M104.0 256.0C104.7 257.0 106.3 261.0 108.0 262.0C109.7 263.0 112.3 263.0 114.0 262.0C115.7 261.0 117.3 257.0 118.0 256.0" fill="none" stroke="#555" stroke-width="2.6" stroke-linecap="round" stroke-linejoin="round"/>
<path d="M124.0 271.0C124.8 270.5 127.5 267.7 129.0 268.0C130.5 268.3 132.7 270.8 133.0 273.0C133.3 275.2 132.0 278.8 131.0 281.0C130.0 283.2 127.7 285.2 127.0 286.0" fill="none" stroke="#4f4f4f" stroke-width="3.0" stroke-linecap="round" stroke-linejoin="round"/>
<path d="M118.0 272.0C119.0 272.7 122.7 274.2 124.0 276.0C125.3 277.8 125.7 281.8 126.0 283.0" fill="none" stroke="#6a6a6a" stroke-width="2.0" stroke-linecap="round" stroke-linejoin="round"/>
<path d="M57.0 253.3C58.0 254.3 61.9 256.7 63.1 259.4C64.3 262.1 63.4 268.4 64.4 269.3C65.4 270.2 67.4 266.2 69.0 265.0C70.6 263.8 71.7 261.8 74.2 261.9C76.7 262.0 82.4 265.0 84.0 265.6" fill="none" stroke="#58b4ea" stroke-width="1.1" stroke-linecap="round" stroke-linejoin="round"/>
<path d="M60.0 256.5C60.7 256.4 63.0 255.4 64.0 256.0C65.0 256.6 65.7 259.3 66.0 260.0" fill="none" stroke="#58b4ea" stroke-width="1.0" stroke-linecap="round" stroke-linejoin="round"/>
<path d="M70.0 262.0C71.0 262.8 74.2 265.5 76.0 267.0C77.8 268.5 80.2 270.3 81.0 271.0" fill="none" stroke="#2f82bd" stroke-width="1.0" stroke-linecap="round" stroke-linejoin="round"/>
<path d="M79.4 267.5 L79.1 269.6 L78.7 271.3 L78.5 272.5 L78.6 273.0 L79.2 272.9 L80.2 272.3 L81.7 271.3 L83.5 270.2 L85.6 269.3 L87.7 268.8 L89.6 268.9 L91.2 269.6 L92.4 270.9 L93.1 272.7 L93.4 274.9 L93.2 277.1 L92.9 279.2 L92.5 280.9 L92.3 282.0 L92.4 282.5 L93.0 282.4 L94.0 281.7 L95.5 280.8 L97.4 279.7 L99.5 278.8 L101.6 278.3 L103.5 278.4 L105.1 279.1 L106.3 280.5 L107.0 282.3 L107.2 284.5 L107.0 286.8 L106.7 288.8 L106.3 290.5 L106.1 291.6 L106.3 292.1 L106.8 291.9 L107.9 291.2 L109.4 290.2 L111.3 289.2 L113.4 288.3 L115.5 287.9 L117.4 288.0 L119.0 288.7 L120.1 290.1 L120.8 292.0 L121.0 294.1 L120.8 296.4 L120.5 298.4 L120.1 300.1 L119.9 301.2 L120.1 301.6 L120.7 301.4 L121.8 300.7 L123.3 299.7 L125.2 298.7 L127.3 297.8 L129.4 297.4 L131.3 297.5 L132.9 298.3 L134.0 299.7 L134.6 301.6 L134.8 303.8 L134.6 306.0 L134.3 308.1 L133.9 309.7 L133.7 310.7" fill="none" stroke="#2f82bd" stroke-width="5.2" stroke-linejoin="round" stroke-linecap="round"/>
<path d="M79.4 267.5 L79.1 269.6 L78.7 271.3 L78.5 272.5 L78.6 273.0 L79.2 272.9 L80.2 272.3 L81.7 271.3 L83.5 270.2 L85.6 269.3 L87.7 268.8 L89.6 268.9 L91.2 269.6 L92.4 270.9 L93.1 272.7 L93.4 274.9 L93.2 277.1 L92.9 279.2 L92.5 280.9 L92.3 282.0 L92.4 282.5 L93.0 282.4 L94.0 281.7 L95.5 280.8 L97.4 279.7 L99.5 278.8 L101.6 278.3 L103.5 278.4 L105.1 279.1 L106.3 280.5 L107.0 282.3 L107.2 284.5 L107.0 286.8 L106.7 288.8 L106.3 290.5 L106.1 291.6 L106.3 292.1 L106.8 291.9 L107.9 291.2 L109.4 290.2 L111.3 289.2 L113.4 288.3 L115.5 287.9 L117.4 288.0 L119.0 288.7 L120.1 290.1 L120.8 292.0 L121.0 294.1 L120.8 296.4 L120.5 298.4 L120.1 300.1 L119.9 301.2 L120.1 301.6 L120.7 301.4 L121.8 300.7 L123.3 299.7 L125.2 298.7 L127.3 297.8 L129.4 297.4 L131.3 297.5 L132.9 298.3 L134.0 299.7 L134.6 301.6 L134.8 303.8 L134.6 306.0 L134.3 308.1 L133.9 309.7 L133.7 310.7" fill="none" stroke="#58b4ea" stroke-width="4.2" stroke-linejoin="round" stroke-linecap="round"/>
<path d="M79.4 267.5 L79.1 269.6 L78.7 271.3 L78.5 272.5 L78.6 273.0 L79.2 272.9 L80.2 272.3 L81.7 271.3 L83.5 270.2 L85.6 269.3 L87.7 268.8 L89.6 268.9 L91.2 269.6 L92.4 270.9 L93.1 272.7 L93.4 274.9 L93.2 277.1 L92.9 279.2 L92.5 280.9 L92.3 282.0 L92.4 282.5 L93.0 282.4 L94.0 281.7 L95.5 280.8 L97.4 279.7 L99.5 278.8 L101.6 278.3 L103.5 278.4 L105.1 279.1 L106.3 280.5 L107.0 282.3 L107.2 284.5 L107.0 286.8 L106.7 288.8 L106.3 290.5 L106.1 291.6 L106.3 292.1 L106.8 291.9 L107.9 291.2 L109.4 290.2 L111.3 289.2 L113.4 288.3 L115.5 287.9 L117.4 288.0 L119.0 288.7 L120.1 290.1 L120.8 292.0 L121.0 294.1 L120.8 296.4 L120.5 298.4 L120.1 300.1 L119.9 301.2 L120.1 301.6 L120.7 301.4 L121.8 300.7 L123.3 299.7 L125.2 298.7 L127.3 297.8 L129.4 297.4 L131.3 297.5 L132.9 298.3 L134.0 299.7 L134.6 301.6 L134.8 303.8 L134.6 306.0 L134.3 308.1 L133.9 309.7 L133.7 310.7" fill="none" stroke="#9bd8ff" stroke-width="1.3" stroke-linejoin="round" stroke-linecap="round" opacity=".8"/>
<path d="M92.0 268.0C92.8 267.0 95.8 261.7 97.0 262.0C98.2 262.3 98.7 268.7 99.0 270.0" fill="none" stroke="#58b4ea" stroke-width="1.2" stroke-linecap="round" stroke-linejoin="round"/>
<path d="M134.6 300.0C134.6 301.3 134.8 305.3 134.8 308.0C134.8 310.7 134.5 314.7 134.4 316.0" fill="none" stroke="#2f82bd" stroke-width="4.4" stroke-linecap="round" stroke-linejoin="round"/>
<path d="M134.6 300.0C134.6 301.3 134.8 305.3 134.8 308.0C134.8 310.7 134.5 314.7 134.4 316.0" fill="none" stroke="#58b4ea" stroke-width="3.4" stroke-linecap="round" stroke-linejoin="round"/>
<path d="M134.6 300.0C134.6 301.3 134.8 305.3 134.8 308.0C134.8 310.7 134.5 314.7 134.4 316.0" fill="none" stroke="#9bd8ff" stroke-width="1.19" stroke-linecap="round" stroke-linejoin="round"/>
<path d="M125.0 302.0C125.8 301.3 128.0 298.3 130.0 298.0C132.0 297.7 135.8 299.7 137.0 300.0" fill="none" stroke="#58b4ea" stroke-width="2.0" stroke-linecap="round" stroke-linejoin="round"/>
<path d="M111.0 310.0C111.5 310.4 112.8 312.7 114.0 312.5C115.2 312.3 117.3 308.9 118.5 308.7C119.7 308.4 120.6 310.6 121.0 311.0" fill="none" stroke="#58b4ea" stroke-width="2.2" stroke-linecap="round" stroke-linejoin="round"/>
<path d="M111.0 310.0C109.8 310.7 105.8 311.8 104.0 314.0C102.2 316.2 100.0 320.0 100.0 323.4C100.0 326.8 101.4 332.0 103.7 334.5C106.0 337.0 111.9 337.6 113.6 338.2" fill="none" stroke="#58b4ea" stroke-width="1.3" stroke-linecap="round" stroke-linejoin="round"/>
<path d="M107.0 312.0C107.8 313.0 110.9 315.7 112.0 318.0C113.1 320.3 113.7 323.5 113.5 326.0C113.3 328.5 111.4 331.8 111.0 333.0" fill="none" stroke="#2f82bd" stroke-width="1.1" stroke-linecap="round" stroke-linejoin="round"/>
<path d="M110.0 327.0 L113.0 325.0" fill="none" stroke="#9bd8ff" stroke-width="1.6" stroke-linecap="round" stroke-linejoin="round"/>
<path d="M111.8 336.4 L111.4 337.7 L111.0 338.8 L110.8 339.6 L110.8 340.0 L111.2 340.1 L112.0 339.9 L113.1 339.5 L114.5 339.1 L115.9 338.9 L117.4 338.9 L118.7 339.2 L119.7 339.9 L120.3 340.9 L120.6 342.2 L120.6 343.6 L120.3 345.1 L119.9 346.4 L119.5 347.5 L119.3 348.3 L119.3 348.7 L119.7 348.8 L120.5 348.6 L121.6 348.2 L123.0 347.8 L124.4 347.6 L125.9 347.6 L127.2 347.9 L128.2 348.6 L128.8 349.6 L129.1 350.9 L129.1 352.3 L128.8 353.8" fill="none" stroke="#2f82bd" stroke-width="4.4" stroke-linejoin="round" stroke-linecap="round"/>
<path d="M111.8 336.4 L111.4 337.7 L111.0 338.8 L110.8 339.6 L110.8 340.0 L111.2 340.1 L112.0 339.9 L113.1 339.5 L114.5 339.1 L115.9 338.9 L117.4 338.9 L118.7 339.2 L119.7 339.9 L120.3 340.9 L120.6 342.2 L120.6 343.6 L120.3 345.1 L119.9 346.4 L119.5 347.5 L119.3 348.3 L119.3 348.7 L119.7 348.8 L120.5 348.6 L121.6 348.2 L123.0 347.8 L124.4 347.6 L125.9 347.6 L127.2 347.9 L128.2 348.6 L128.8 349.6 L129.1 350.9 L129.1 352.3 L128.8 353.8" fill="none" stroke="#58b4ea" stroke-width="3.4" stroke-linejoin="round" stroke-linecap="round"/>
<path d="M111.8 336.4 L111.4 337.7 L111.0 338.8 L110.8 339.6 L110.8 340.0 L111.2 340.1 L112.0 339.9 L113.1 339.5 L114.5 339.1 L115.9 338.9 L117.4 338.9 L118.7 339.2 L119.7 339.9 L120.3 340.9 L120.6 342.2 L120.6 343.6 L120.3 345.1 L119.9 346.4 L119.5 347.5 L119.3 348.3 L119.3 348.7 L119.7 348.8 L120.5 348.6 L121.6 348.2 L123.0 347.8 L124.4 347.6 L125.9 347.6 L127.2 347.9 L128.2 348.6 L128.8 349.6 L129.1 350.9 L129.1 352.3 L128.8 353.8" fill="none" stroke="#9bd8ff" stroke-width="1.0" stroke-linejoin="round" stroke-linecap="round" opacity=".8"/>
<path d="M124.0 352.0C124.8 352.3 127.2 354.0 129.0 354.0C130.8 354.0 133.7 351.3 134.5 352.0C135.3 352.7 133.8 356.0 134.0 358.0C134.2 360.0 135.7 363.0 136.0 364.0" fill="none" stroke="#58b4ea" stroke-width="1.3" stroke-linecap="round" stroke-linejoin="round"/>
<path d="M128.0 351.0C128.5 350.3 129.5 348.0 131.0 347.0C132.5 346.0 136.0 345.3 137.0 345.0" fill="none" stroke="#58b4ea" stroke-width="1.2" stroke-linecap="round" stroke-linejoin="round"/>
<path d="M117.0 321.0C118.8 320.5 124.2 319.2 128.0 318.0C131.8 316.8 138.0 314.7 140.0 314.0" fill="none" stroke="#d8d8d8" stroke-width="1.0" stroke-linecap="round" stroke-linejoin="round"/>
<path d="M124.0 323.0C125.3 323.5 129.2 324.8 132.0 326.0C134.8 327.2 139.5 329.3 141.0 330.0" fill="none" stroke="#2f82bd" stroke-width="3.4" stroke-linecap="round" stroke-linejoin="round"/>
<path d="M124.0 323.0C125.3 323.5 129.2 324.8 132.0 326.0C134.8 327.2 139.5 329.3 141.0 330.0" fill="none" stroke="#58b4ea" stroke-width="2.4" stroke-linecap="round" stroke-linejoin="round"/>
<path d="M124.0 323.0C125.3 323.5 129.2 324.8 132.0 326.0C134.8 327.2 139.5 329.3 141.0 330.0" fill="none" stroke="#9bd8ff" stroke-width="0.84" stroke-linecap="round" stroke-linejoin="round"/>
<path d="M127.0 332.0C128.5 332.5 132.8 334.0 136.0 335.0C139.2 336.0 144.3 337.5 146.0 338.0" fill="none" stroke="#58b4ea" stroke-width="1.4" stroke-linecap="round" stroke-linejoin="round"/>
<path d="M130.0 340.0C131.5 339.5 136.2 336.8 139.0 337.0C141.8 337.2 146.5 339.2 147.0 341.0C147.5 342.8 142.8 346.8 142.0 348.0" fill="none" stroke="#58b4ea" stroke-width="1.2" stroke-linecap="round" stroke-linejoin="round"/>
<path d="M126.0 345.0C127.0 345.7 129.7 348.0 132.0 349.0C134.3 350.0 138.7 350.7 140.0 351.0" fill="none" stroke="#2f82bd" stroke-width="1.2" stroke-linecap="round" stroke-linejoin="round"/>
<path d="M136.0 331.0C136.7 332.2 139.0 335.5 140.0 338.0C141.0 340.5 141.7 344.7 142.0 346.0" fill="none" stroke="#58b4ea" stroke-width="1.0" stroke-linecap="round" stroke-linejoin="round"/>
<path d="M137.0 287.0C138.5 286.5 142.7 284.7 146.0 284.0C149.3 283.3 153.3 283.7 157.0 283.0C160.7 282.3 165.2 280.0 168.0 280.0C170.8 280.0 173.7 281.7 174.0 283.0C174.3 284.3 172.7 286.8 170.0 288.0C167.3 289.2 161.8 289.5 158.0 290.0C154.2 290.5 148.8 290.8 147.0 291.0" fill="none" stroke="#cfcfcf" stroke-width="1.4" stroke-linecap="round" stroke-linejoin="round"/>
<path d="M152.0 281.0C152.8 280.5 154.5 278.6 157.0 278.0C159.5 277.4 164.3 277.2 167.0 277.5C169.7 277.8 172.0 279.6 173.0 280.0" fill="none" stroke="#bdbdbd" stroke-width="1.3" stroke-linecap="round" stroke-linejoin="round"/>
<path d="M140.0 290.0C141.7 289.8 146.3 288.8 150.0 289.0C153.7 289.2 158.7 290.3 162.0 291.0C165.3 291.7 168.7 292.7 170.0 293.0" fill="none" stroke="#a8a8a8" stroke-width="1.1" stroke-linecap="round" stroke-linejoin="round"/>
<path d="M127.0 290.0C128.0 289.7 131.0 287.8 133.0 288.0C135.0 288.2 138.0 290.5 139.0 291.0" fill="none" stroke="#e8730e" stroke-width="1.6" stroke-linecap="round" stroke-linejoin="round"/>
<path d="M126.0 286.0C126.5 285.5 128.7 284.2 129.0 283.0C129.3 281.8 128.2 279.7 128.0 279.0" fill="none" stroke="#e8730e" stroke-width="1.4" stroke-linecap="round" stroke-linejoin="round"/>
<path d="M119.0 244.0 L121.0 248.0" fill="none" stroke="#e8730e" stroke-width="1.4" stroke-linecap="round" stroke-linejoin="round"/>
<path d="M90.0 250.0 L91.0 254.0" fill="none" stroke="#e8730e" stroke-width="1.2" stroke-linecap="round" stroke-linejoin="round"/>
<path d="M112.0 272.0C112.8 272.7 115.3 274.5 117.0 276.0C118.7 277.5 121.2 280.2 122.0 281.0" fill="none" stroke="#e8730e" stroke-width="1.6" stroke-linecap="round" stroke-linejoin="round"/>
<path d="M106.0 279.0C107.2 279.7 110.5 281.7 113.0 283.0C115.5 284.3 118.5 285.8 121.0 287.0C123.5 288.2 126.8 289.5 128.0 290.0" fill="none" stroke="#d2d2d2" stroke-width="1.3" stroke-linecap="round" stroke-linejoin="round"/>
<path d="M120.0 290.0C121.2 290.7 124.8 292.8 127.0 294.0C129.2 295.2 132.0 296.5 133.0 297.0" fill="none" stroke="#e8730e" stroke-width="1.5" stroke-linecap="round" stroke-linejoin="round"/>
<path d="M138.0 300.0C139.3 299.3 143.7 295.8 146.0 296.0C148.3 296.2 151.3 298.7 152.0 301.0C152.7 303.3 149.5 307.5 150.0 310.0C150.5 312.5 152.8 314.7 155.0 316.0C157.2 317.3 161.7 317.7 163.0 318.0" fill="none" stroke="#e8730e" stroke-width="1.5" stroke-linecap="round" stroke-linejoin="round"/>
<path d="M149.0 292.0C150.5 292.3 155.2 293.0 158.0 294.0C160.8 295.0 163.7 296.2 166.0 298.0C168.3 299.8 170.3 302.5 172.0 305.0C173.7 307.5 174.5 310.3 176.0 313.0C177.5 315.7 180.2 319.7 181.0 321.0" fill="none" stroke="#e8730e" stroke-width="1.4" stroke-linecap="round" stroke-linejoin="round"/>
<path d="M160.0 293.0C161.7 293.0 167.2 292.3 170.0 293.0C172.8 293.7 174.8 295.3 177.0 297.0C179.2 298.7 181.2 300.7 183.0 303.0C184.8 305.3 187.5 308.2 188.0 311.0C188.5 313.8 186.3 318.5 186.0 320.0" fill="none" stroke="#b85400" stroke-width="1.3" stroke-linecap="round" stroke-linejoin="round"/>
<path d="M142.0 318.0C143.3 318.5 147.0 320.0 150.0 321.0C153.0 322.0 156.7 323.2 160.0 324.0C163.3 324.8 166.7 325.3 170.0 326.0C173.3 326.7 178.3 327.7 180.0 328.0" fill="none" stroke="#e8730e" stroke-width="1.4" stroke-linecap="round" stroke-linejoin="round"/>
<path d="M148.0 312.0C149.3 313.3 153.0 318.3 156.0 320.0C159.0 321.7 164.3 321.7 166.0 322.0" fill="none" stroke="#c9c9c9" stroke-width="1.2" stroke-linecap="round" stroke-linejoin="round"/>
<path d="M156.0 305.0C156.7 306.2 158.7 309.7 160.0 312.0C161.3 314.3 163.3 317.8 164.0 319.0" fill="none" stroke="#c4c4c4" stroke-width="2.6" stroke-linecap="round" stroke-linejoin="round"/>
<path d="M156.0 305.0C156.7 306.2 158.7 309.7 160.0 312.0C161.3 314.3 163.3 317.8 164.0 319.0" fill="none" stroke="#f2f2f2" stroke-width="0.9099999999999999" stroke-linecap="round" stroke-linejoin="round"/>
<path d="M166.0 300.0C167.0 301.3 170.3 305.0 172.0 308.0C173.7 311.0 175.3 316.3 176.0 318.0" fill="none" stroke="#d2d2d2" stroke-width="1.3" stroke-linecap="round" stroke-linejoin="round"/>
<path d="M176.5 292.5C176.9 293.2 178.6 295.4 178.8 297.0C179.1 298.6 178.1 301.2 178.0 302.0" fill="none" stroke="#dcdcdc" stroke-width="4.4" stroke-linecap="round" stroke-linejoin="round"/>
<path d="M176.5 292.5C176.9 293.2 178.6 295.4 178.8 297.0C179.1 298.6 178.1 301.2 178.0 302.0" fill="none" stroke="#ffffff" stroke-width="1.54" stroke-linecap="round" stroke-linejoin="round"/>
<path d="M188.5 293.5C188.9 294.2 190.6 296.4 190.8 298.0C191.0 299.6 189.7 302.2 189.5 303.0" fill="none" stroke="#d4d4d4" stroke-width="4.0" stroke-linecap="round" stroke-linejoin="round"/>
<path d="M188.5 293.5C188.9 294.2 190.6 296.4 190.8 298.0C191.0 299.6 189.7 302.2 189.5 303.0" fill="none" stroke="#fcfcfc" stroke-width="1.4" stroke-linecap="round" stroke-linejoin="round"/>
<path d="M199.5 292.5C199.9 293.2 201.6 295.4 201.8 297.0C202.1 298.6 201.1 301.2 201.0 302.0" fill="none" stroke="#c6c6c6" stroke-width="3.4" stroke-linecap="round" stroke-linejoin="round"/>
<path d="M199.5 292.5C199.9 293.2 201.6 295.4 201.8 297.0C202.1 298.6 201.1 301.2 201.0 302.0" fill="none" stroke="#f0f0f0" stroke-width="1.19" stroke-linecap="round" stroke-linejoin="round"/>
<path d="M182.2 300.3 L182.3 301.7 L182.3 302.9 L182.3 303.7 L182.2 304.0 L182.4 303.7 L182.7 303.0 L183.2 301.9 L183.9 300.7 L184.9 299.5 L185.9 298.6 L187.0 298.0 L188.1 298.0 L189.0 298.5 L189.8 299.5 L190.3 300.8 L190.6 302.3 L190.7 303.7 L190.6 304.9 L190.6 305.7 L190.6 306.0 L190.7 305.7 L191.0 305.0 L191.5 303.9 L192.3 302.7 L193.2 301.5 L194.3 300.6 L195.4 300.0 L196.4 300.0 L197.3 300.5 L198.1 301.5 L198.6 302.8 L198.9 304.3 L199.0 305.7 L199.0 306.9 L198.9 307.7 L198.9 308.0 L199.0 307.7 L199.3 307.0 L199.9 305.9 L200.6 304.7 L201.5 303.5 L202.6 302.6 L203.7 302.0 L204.8 302.0 L205.7 302.5 L206.4 303.5 L206.9 304.8 L207.2 306.3" fill="none" stroke="#b85400" stroke-width="3.0" stroke-linejoin="round" stroke-linecap="round"/>
<path d="M182.2 300.3 L182.3 301.7 L182.3 302.9 L182.3 303.7 L182.2 304.0 L182.4 303.7 L182.7 303.0 L183.2 301.9 L183.9 300.7 L184.9 299.5 L185.9 298.6 L187.0 298.0 L188.1 298.0 L189.0 298.5 L189.8 299.5 L190.3 300.8 L190.6 302.3 L190.7 303.7 L190.6 304.9 L190.6 305.7 L190.6 306.0 L190.7 305.7 L191.0 305.0 L191.5 303.9 L192.3 302.7 L193.2 301.5 L194.3 300.6 L195.4 300.0 L196.4 300.0 L197.3 300.5 L198.1 301.5 L198.6 302.8 L198.9 304.3 L199.0 305.7 L199.0 306.9 L198.9 307.7 L198.9 308.0 L199.0 307.7 L199.3 307.0 L199.9 305.9 L200.6 304.7 L201.5 303.5 L202.6 302.6 L203.7 302.0 L204.8 302.0 L205.7 302.5 L206.4 303.5 L206.9 304.8 L207.2 306.3" fill="none" stroke="#e8730e" stroke-width="2.0" stroke-linejoin="round" stroke-linecap="round"/>
<path d="M182.2 300.3 L182.3 301.7 L182.3 302.9 L182.3 303.7 L182.2 304.0 L182.4 303.7 L182.7 303.0 L183.2 301.9 L183.9 300.7 L184.9 299.5 L185.9 298.6 L187.0 298.0 L188.1 298.0 L189.0 298.5 L189.8 299.5 L190.3 300.8 L190.6 302.3 L190.7 303.7 L190.6 304.9 L190.6 305.7 L190.6 306.0 L190.7 305.7 L191.0 305.0 L191.5 303.9 L192.3 302.7 L193.2 301.5 L194.3 300.6 L195.4 300.0 L196.4 300.0 L197.3 300.5 L198.1 301.5 L198.6 302.8 L198.9 304.3 L199.0 305.7 L199.0 306.9 L198.9 307.7 L198.9 308.0 L199.0 307.7 L199.3 307.0 L199.9 305.9 L200.6 304.7 L201.5 303.5 L202.6 302.6 L203.7 302.0 L204.8 302.0 L205.7 302.5 L206.4 303.5 L206.9 304.8 L207.2 306.3" fill="none" stroke="#ff9a3a" stroke-width="0.7" stroke-linejoin="round" stroke-linecap="round" opacity=".8"/>
<path d="M180.0 304.0C181.0 305.5 184.0 310.3 186.0 313.0C188.0 315.7 189.7 318.2 192.0 320.0C194.3 321.8 197.7 323.8 200.0 324.0C202.3 324.2 205.0 321.5 206.0 321.0" fill="none" stroke="#e8730e" stroke-width="1.3" stroke-linecap="round" stroke-linejoin="round"/>
<path d="M184.0 309.0C185.3 309.5 189.3 311.8 192.0 312.0C194.7 312.2 197.5 311.3 200.0 310.0C202.5 308.7 205.8 305.0 207.0 304.0" fill="none" stroke="#b85400" stroke-width="1.3" stroke-linecap="round" stroke-linejoin="round"/>
<path d="M190.0 316.0C191.0 317.0 193.8 320.3 196.0 322.0C198.2 323.7 200.9 325.8 203.0 326.0C205.1 326.2 207.7 323.8 208.6 323.4" fill="none" stroke="#e8730e" stroke-width="1.2" stroke-linecap="round" stroke-linejoin="round"/>
<path d="M195.0 303.0C196.0 304.5 199.3 309.2 201.0 312.0C202.7 314.8 204.3 318.7 205.0 320.0" fill="none" stroke="#d0d0d0" stroke-width="1.1" stroke-linecap="round" stroke-linejoin="round"/>
<path d="M186.0 306.0C186.8 308.0 189.2 314.5 191.0 318.0C192.8 321.5 196.0 325.5 197.0 327.0" fill="none" stroke="#bdbdbd" stroke-width="1.0" stroke-linecap="round" stroke-linejoin="round"/>
<path d="M201.0 294.0C201.8 293.3 204.5 290.0 206.0 290.0C207.5 290.0 209.7 292.2 210.0 294.0C210.3 295.8 208.3 299.8 208.0 301.0" fill="none" stroke="#e8730e" stroke-width="1.3" stroke-linecap="round" stroke-linejoin="round"/>
<path d="M207.0 299.0C207.7 299.0 208.5 298.8 211.0 298.8C213.5 298.8 218.3 298.4 222.0 299.0C225.7 299.6 231.3 301.9 233.2 302.5" fill="none" stroke="#e8730e" stroke-width="1.2" stroke-linecap="round" stroke-linejoin="round"/>
<path d="M233.2 302.5C232.5 303.2 230.6 305.6 229.0 307.0C227.4 308.4 225.7 309.3 223.4 311.0C221.1 312.7 217.5 314.9 215.0 317.0C212.5 319.1 209.7 322.3 208.6 323.4" fill="none" stroke="#e8730e" stroke-width="1.2" stroke-linecap="round" stroke-linejoin="round"/>
<polygon points="231.0,300.5 235.0,302.5 231.0,305.0" fill="#e8730e"/>
<path d="M170.0 326.0C171.0 326.8 174.3 329.2 176.0 331.0C177.7 332.8 179.3 336.0 180.0 337.0" fill="none" stroke="#e8730e" stroke-width="1.3" stroke-linecap="round" stroke-linejoin="round"/>
<path d="M165.6 340.6C166.7 340.4 169.9 339.1 172.0 339.5C174.1 339.9 176.9 342.4 177.9 343.0" fill="none" stroke="#b85400" stroke-width="3.6" stroke-linecap="round" stroke-linejoin="round"/>
<path d="M165.6 340.6C166.7 340.4 169.9 339.1 172.0 339.5C174.1 339.9 176.9 342.4 177.9 343.0" fill="none" stroke="#e8730e" stroke-width="2.6" stroke-linecap="round" stroke-linejoin="round"/>
<path d="M165.6 340.6C166.7 340.4 169.9 339.1 172.0 339.5C174.1 339.9 176.9 342.4 177.9 343.0" fill="none" stroke="#ff9a3a" stroke-width="0.9099999999999999" stroke-linecap="round" stroke-linejoin="round"/>
<path d="M177.9 343.0C177.6 343.7 177.2 345.6 176.0 347.0C174.8 348.4 173.2 349.8 170.5 351.6C167.8 353.4 163.3 355.5 160.0 358.0C156.7 360.5 152.3 365.0 150.8 366.4" fill="none" stroke="#e8730e" stroke-width="1.3" stroke-linecap="round" stroke-linejoin="round"/>
<path d="M150.8 366.4C152.0 365.3 155.5 361.7 158.0 360.0C160.5 358.3 164.7 356.7 166.0 356.0" fill="none" stroke="#bdbdbd" stroke-width="1.0" stroke-linecap="round" stroke-linejoin="round"/>
<path d="M165.6 340.6C166.2 341.2 168.6 342.8 169.0 344.0C169.4 345.2 168.2 347.3 168.0 348.0" fill="none" stroke="#c9c9c9" stroke-width="1.6" stroke-linecap="round" stroke-linejoin="round"/>
<path d="M177.0 333.0 L179.0 340.0" fill="none" stroke="#e8730e" stroke-width="1.3" stroke-linecap="round" stroke-linejoin="round"/>
<path d="M143.0 352.0C143.8 353.0 146.7 355.6 148.0 358.0C149.3 360.4 150.3 365.0 150.8 366.4" fill="none" stroke="#7a7a7a" stroke-width="1.0" stroke-linecap="round" stroke-linejoin="round"/>
<path d="M140.0 325.0C141.7 325.8 147.3 328.2 150.0 330.0C152.7 331.8 155.0 335.0 156.0 336.0" fill="none" stroke="#9a9a9a" stroke-width="1.0" stroke-linecap="round" stroke-linejoin="round"/>
<g id="lcl">
<path d="M92.6 243.0C92.4 244.8 91.0 250.2 91.5 254.0C92.0 257.8 95.0 261.8 95.5 266.0C96.0 270.2 94.7 276.8 94.5 279.0" fill="none" stroke="#c2c2c2" stroke-width="1.2" stroke-linecap="round" stroke-linejoin="round"/>
<path d="M93.8 252.0 L94.8 258.0" fill="none" stroke="#e8730e" stroke-width="1.6" stroke-linecap="round" stroke-linejoin="round"/>
<path d="M123.3 253.0 L125.0 259.0" fill="none" stroke="#e8730e" stroke-width="1.6" stroke-linecap="round" stroke-linejoin="round"/>
<path d="M106.0 269.0 L110.0 279.0" fill="none" stroke="#e8730e" stroke-width="1.8" stroke-linecap="round" stroke-linejoin="round"/>
<path d="M120.5 274.0 L127.0 285.0" fill="none" stroke="#e8730e" stroke-width="2.0" stroke-linecap="round" stroke-linejoin="round"/>
<path d="M128.0 281.5C128.5 281.9 130.0 283.2 131.0 284.0C132.0 284.8 133.5 286.0 134.0 286.4" fill="none" stroke="#d6d6d6" stroke-width="2.8" stroke-linecap="round" stroke-linejoin="round"/>
<path d="M128.0 281.5C128.5 281.9 130.0 283.2 131.0 284.0C132.0 284.8 133.5 286.0 134.0 286.4" fill="none" stroke="#ffffff" stroke-width="0.9799999999999999" stroke-linecap="round" stroke-linejoin="round"/>
<path d="M133.0 278.0C133.7 278.8 135.8 281.2 137.0 283.0C138.2 284.8 139.9 288.0 140.5 289.0" fill="none" stroke="#707070" stroke-width="3.0" stroke-linecap="round" stroke-linejoin="round"/>
<path d="M140.5 286.4C142.9 285.5 149.7 282.4 155.0 281.0C160.3 279.6 168.9 277.8 172.4 277.8C175.9 277.8 175.8 279.8 176.0 281.0C176.2 282.2 176.4 283.8 173.7 285.2C171.0 286.6 165.1 288.3 160.0 289.5C154.9 290.7 145.8 292.1 143.0 292.6" fill="none" stroke="#d8d8d8" stroke-width="1.3" stroke-linecap="round" stroke-linejoin="round"/>
<path d="M146.0 288.0C148.0 287.6 154.0 286.1 158.0 285.5C162.0 284.9 168.0 284.7 170.0 284.5" fill="none" stroke="#e8730e" stroke-width="1.1" stroke-linecap="round" stroke-linejoin="round"/>
<path d="M143.0 296.3C143.8 298.2 145.9 304.3 148.0 308.0C150.1 311.7 152.0 315.6 155.3 318.4C158.6 321.2 163.5 323.4 168.0 325.0C172.5 326.6 179.9 327.7 182.3 328.2" fill="none" stroke="#e8730e" stroke-width="1.6" stroke-linecap="round" stroke-linejoin="round"/>
<path d="M145.0 299.0C146.0 301.0 148.5 307.3 151.0 311.0C153.5 314.7 156.2 318.3 160.0 321.0C163.8 323.7 171.7 326.0 174.0 327.0" fill="none" stroke="#b85400" stroke-width="1.3" stroke-linecap="round" stroke-linejoin="round"/>
<path d="M150.0 296.0C151.7 296.7 157.0 298.0 160.0 300.0C163.0 302.0 166.0 305.0 168.0 308.0C170.0 311.0 171.7 315.0 172.0 318.0C172.3 321.0 170.3 324.7 170.0 326.0" fill="none" stroke="#e8730e" stroke-width="1.4" stroke-linecap="round" stroke-linejoin="round"/>
<path d="M153.0 292.0C155.0 292.7 161.5 294.3 165.0 296.0C168.5 297.7 171.5 299.3 174.0 302.0C176.5 304.7 178.7 308.7 180.0 312.0C181.3 315.3 181.7 320.3 182.0 322.0" fill="none" stroke="#e8730e" stroke-width="1.3" stroke-linecap="round" stroke-linejoin="round"/>
<path d="M155.3 298.7C156.1 300.4 158.2 305.3 160.0 309.0C161.8 312.7 165.2 318.9 166.3 320.9" fill="none" stroke="#bdbdbd" stroke-width="3.0" stroke-linecap="round" stroke-linejoin="round"/>
<path d="M155.3 298.7C156.1 300.4 158.2 305.3 160.0 309.0C161.8 312.7 165.2 318.9 166.3 320.9" fill="none" stroke="#efefef" stroke-width="1.0499999999999998" stroke-linecap="round" stroke-linejoin="round"/>
<path d="M158.0 297.0C159.0 299.0 162.0 305.0 164.0 309.0C166.0 313.0 169.0 319.0 170.0 321.0" fill="none" stroke="#d9d9d9" stroke-width="1.2" stroke-linecap="round" stroke-linejoin="round"/>
<path d="M163.0 296.0C164.2 297.7 168.0 302.3 170.0 306.0C172.0 309.7 173.7 314.7 175.0 318.0C176.3 321.3 177.5 324.7 178.0 326.0" fill="none" stroke="#c4c4c4" stroke-width="1.1" stroke-linecap="round" stroke-linejoin="round"/>
<path d="M147.0 303.0C148.2 302.5 151.5 300.0 154.0 300.0C156.5 300.0 160.7 302.5 162.0 303.0" fill="none" stroke="#e8730e" stroke-width="1.8" stroke-linecap="round" stroke-linejoin="round"/>
<path d="M140.0 298.0C141.0 298.7 144.7 300.0 146.0 302.0C147.3 304.0 148.3 307.7 148.0 310.0C147.7 312.3 144.7 315.0 144.0 316.0" fill="none" stroke="#e8730e" stroke-width="1.6" stroke-linecap="round" stroke-linejoin="round"/>
<path d="M172.0 295.0C173.3 295.7 177.7 297.0 180.0 299.0C182.3 301.0 184.3 304.0 186.0 307.0C187.7 310.0 189.7 313.8 190.0 317.0C190.3 320.2 188.3 324.5 188.0 326.0" fill="none" stroke="#e8730e" stroke-width="1.3" stroke-linecap="round" stroke-linejoin="round"/>
<path d="M176.0 300.0C177.3 300.7 181.3 303.7 184.0 304.0C186.7 304.3 189.3 301.7 192.0 302.0C194.7 302.3 197.7 304.3 200.0 306.0C202.3 307.7 205.3 309.7 206.0 312.0C206.7 314.3 204.3 318.7 204.0 320.0" fill="none" stroke="#e8730e" stroke-width="1.3" stroke-linecap="round" stroke-linejoin="round"/>
<path d="M182.0 296.0C183.3 295.3 187.3 292.0 190.0 292.0C192.7 292.0 195.7 294.3 198.0 296.0C200.3 297.7 203.3 299.7 204.0 302.0C204.7 304.3 203.3 307.7 202.0 310.0C200.7 312.3 198.3 315.3 196.0 316.0C193.7 316.7 189.3 314.3 188.0 314.0" fill="none" stroke="#e8730e" stroke-width="1.4" stroke-linecap="round" stroke-linejoin="round"/>
<path d="M192.0 298.0C193.0 299.0 196.0 302.3 198.0 304.0C200.0 305.7 202.0 307.7 204.0 308.0C206.0 308.3 208.7 307.3 210.0 306.0C211.3 304.7 211.7 301.0 212.0 300.0" fill="none" stroke="#b85400" stroke-width="1.3" stroke-linecap="round" stroke-linejoin="round"/>
<path d="M186.0 322.0C187.7 322.7 192.7 325.7 196.0 326.0C199.3 326.3 203.0 325.3 206.0 324.0C209.0 322.7 211.7 320.3 214.0 318.0C216.3 315.7 219.0 311.3 220.0 310.0" fill="none" stroke="#e8730e" stroke-width="1.2" stroke-linecap="round" stroke-linejoin="round"/>
<path d="M194.0 308.0C195.3 309.3 199.3 314.3 202.0 316.0C204.7 317.7 207.7 318.7 210.0 318.0C212.3 317.3 215.0 313.0 216.0 312.0" fill="none" stroke="#cfcfcf" stroke-width="1.0" stroke-linecap="round" stroke-linejoin="round"/>
<path d="M180.0 316.0C181.7 317.0 186.7 321.3 190.0 322.0C193.3 322.7 198.3 320.3 200.0 320.0" fill="none" stroke="#dadada" stroke-width="1.0" stroke-linecap="round" stroke-linejoin="round"/>
<path d="M205.0 293.0C206.2 293.5 209.8 294.2 212.0 296.0C214.2 297.8 217.7 301.3 218.0 304.0C218.3 306.7 214.7 310.7 214.0 312.0" fill="none" stroke="#e8730e" stroke-width="1.2" stroke-linecap="round" stroke-linejoin="round"/>
<path d="M170.0 330.0C171.0 331.0 174.3 333.7 176.0 336.0C177.7 338.3 179.3 342.7 180.0 344.0" fill="none" stroke="#e8730e" stroke-width="1.4" stroke-linecap="round" stroke-linejoin="round"/>
<path d="M165.0 340.5C166.2 340.2 169.7 338.8 172.0 339.0C174.3 339.2 177.9 340.5 178.6 341.7C179.3 342.9 177.0 344.6 176.0 346.0C175.0 347.4 173.8 348.8 172.4 350.3C171.0 351.8 169.9 353.2 167.5 355.2C165.1 357.1 160.9 359.9 158.0 362.0C155.1 364.1 151.6 366.6 150.3 367.5" fill="none" stroke="#e8730e" stroke-width="1.5" stroke-linecap="round" stroke-linejoin="round"/>
<path d="M101.2 323.3C101.5 322.4 102.2 319.4 103.0 318.0C103.8 316.6 104.9 315.5 106.1 314.7C107.3 313.9 108.8 313.2 110.0 313.0C111.2 312.8 112.5 312.7 113.5 313.5C114.5 314.3 115.6 316.4 116.0 318.0C116.4 319.6 116.2 321.5 115.9 323.3C115.6 325.1 114.8 327.4 114.0 329.0C113.2 330.6 111.5 332.4 111.0 333.1" fill="none" stroke="#58b4ea" stroke-width="1.4" stroke-linecap="round" stroke-linejoin="round"/>
<path d="M115.9 323.3C117.2 323.3 121.1 323.1 124.0 323.5C126.9 323.9 130.3 324.3 133.1 325.7C135.9 327.1 138.5 329.5 141.0 332.0C143.5 334.5 147.2 338.3 147.9 340.5C148.6 342.7 146.2 343.8 145.0 345.0C143.8 346.2 142.2 347.5 140.5 347.9C138.8 348.3 136.6 347.9 135.0 347.5C133.4 347.1 131.4 345.8 130.7 345.4" fill="none" stroke="#58b4ea" stroke-width="1.4" stroke-linecap="round" stroke-linejoin="round"/>
<path d="M133.1 306.0C133.2 307.5 133.6 312.1 134.0 315.0C134.4 317.9 135.0 320.5 135.6 323.3C136.2 326.1 136.7 329.1 137.5 332.0C138.3 334.9 140.0 339.1 140.5 340.5" fill="none" stroke="#58b4ea" stroke-width="1.6" stroke-linecap="round" stroke-linejoin="round"/>
<path d="M122.0 322.0C123.3 322.5 127.3 323.8 130.0 325.0C132.7 326.2 136.7 328.3 138.0 329.0" fill="none" stroke="#2f82bd" stroke-width="3.8" stroke-linecap="round" stroke-linejoin="round"/>
<path d="M122.0 322.0C123.3 322.5 127.3 323.8 130.0 325.0C132.7 326.2 136.7 328.3 138.0 329.0" fill="none" stroke="#58b4ea" stroke-width="2.8" stroke-linecap="round" stroke-linejoin="round"/>
<path d="M122.0 322.0C123.3 322.5 127.3 323.8 130.0 325.0C132.7 326.2 136.7 328.3 138.0 329.0" fill="none" stroke="#9bd8ff" stroke-width="0.9799999999999999" stroke-linecap="round" stroke-linejoin="round"/>
<path d="M118.0 321.0C119.7 320.6 124.5 319.3 128.0 318.5C131.5 317.7 137.2 316.4 139.0 316.0" fill="none" stroke="#d0d0d0" stroke-width="1.1" stroke-linecap="round" stroke-linejoin="round"/>
</g>
<use href="#lcl" transform="translate(1.5,-1.2)" opacity=".3"/>
<path d="M176.5 292.5C176.9 293.2 178.6 295.4 178.8 297.0C179.1 298.6 178.1 301.2 178.0 302.0" fill="none" stroke="#dcdcdc" stroke-width="4.2" stroke-linecap="round" stroke-linejoin="round"/>
<path d="M176.5 292.5C176.9 293.2 178.6 295.4 178.8 297.0C179.1 298.6 178.1 301.2 178.0 302.0" fill="none" stroke="#ffffff" stroke-width="1.47" stroke-linecap="round" stroke-linejoin="round"/>
<path d="M188.5 293.5C188.9 294.2 190.6 296.4 190.8 298.0C191.0 299.6 189.7 302.2 189.5 303.0" fill="none" stroke="#d4d4d4" stroke-width="3.8" stroke-linecap="round" stroke-linejoin="round"/>
<path d="M188.5 293.5C188.9 294.2 190.6 296.4 190.8 298.0C191.0 299.6 189.7 302.2 189.5 303.0" fill="none" stroke="#fcfcfc" stroke-width="1.3299999999999998" stroke-linecap="round" stroke-linejoin="round"/>
<path d="M199.5 292.5C199.9 293.2 201.6 295.4 201.8 297.0C202.1 298.6 201.1 301.2 201.0 302.0" fill="none" stroke="#c6c6c6" stroke-width="3.2" stroke-linecap="round" stroke-linejoin="round"/>
<path d="M199.5 292.5C199.9 293.2 201.6 295.4 201.8 297.0C202.1 298.6 201.1 301.2 201.0 302.0" fill="none" stroke="#f0f0f0" stroke-width="1.1199999999999999" stroke-linecap="round" stroke-linejoin="round"/>
<path d="M181.0 296.0C181.5 295.5 183.0 293.0 184.0 293.0C185.0 293.0 186.5 295.5 187.0 296.0" fill="none" stroke="#e8730e" stroke-width="1.8" stroke-linecap="round" stroke-linejoin="round"/>
<path d="M192.5 296.5C193.0 296.0 194.5 293.5 195.5 293.5C196.5 293.5 198.0 296.0 198.5 296.5" fill="none" stroke="#e8730e" stroke-width="1.8" stroke-linecap="round" stroke-linejoin="round"/>
<path d="M180.0 303.0C180.7 303.5 182.7 305.8 184.0 306.0C185.3 306.2 187.3 304.3 188.0 304.0" fill="none" stroke="#ff9a3a" stroke-width="1.6" stroke-linecap="round" stroke-linejoin="round"/>
<path d="M192.0 304.0C192.7 304.5 194.7 307.0 196.0 307.0C197.3 307.0 199.3 304.5 200.0 304.0" fill="none" stroke="#ff9a3a" stroke-width="1.6" stroke-linecap="round" stroke-linejoin="round"/>
<ellipse cx="470" cy="267" rx="4.6" ry="5.4" fill="none" stroke="#4d4d4d" stroke-width="2.2"/>
<ellipse cx="477.5" cy="267" rx="4.6" ry="5.4" fill="none" stroke="#4d4d4d" stroke-width="2.2"/>
<ellipse cx="484" cy="267" rx="4.6" ry="5.4" fill="none" stroke="#4d4d4d" stroke-width="2.2"/>
<path d="M465.6 267.0C466.0 268.0 465.6 271.9 468.0 273.0C470.4 274.1 476.8 273.8 480.0 273.5C483.2 273.2 485.8 271.4 487.0 271.0" fill="none" stroke="#404040" stroke-width="1.6" stroke-linecap="round" stroke-linejoin="round"/>
<ellipse cx="450" cy="276" rx="4.6" ry="5.6" fill="none" stroke="#4d4d4d" stroke-width="2.4" transform="rotate(-20 450 276)"/>
<path d="M452.0 281.0C452.7 281.5 454.3 284.0 456.0 284.0C457.7 284.0 461.0 281.5 462.0 281.0" fill="none" stroke="#404040" stroke-width="2.0" stroke-linecap="round" stroke-linejoin="round"/>
<path d="M488.5 257.4C489.2 258.2 492.8 260.2 493.0 262.0C493.2 263.8 489.5 266.3 490.0 268.0C490.5 269.7 494.6 270.4 496.0 272.0C497.4 273.6 498.6 276.1 498.4 277.9C498.2 279.7 495.6 282.1 495.0 283.0" fill="none" stroke="#4d4d4d" stroke-width="1.6" stroke-linecap="round" stroke-linejoin="round"/>
<path d="M493.0 258.0C494.2 257.8 497.5 255.6 500.0 257.0C502.5 258.4 507.7 263.9 508.2 266.4C508.7 268.9 504.6 270.1 503.0 272.0C501.4 273.9 498.1 274.7 498.4 277.9C498.7 281.1 503.8 288.8 504.9 291.0" fill="none" stroke="#404040" stroke-width="1.3" stroke-linecap="round" stroke-linejoin="round"/>
<path d="M497.0 262.0C497.8 261.5 500.5 258.8 502.0 259.0C503.5 259.2 505.3 262.3 506.0 263.0" fill="none" stroke="#5c5c5c" stroke-width="2.0" stroke-linecap="round" stroke-linejoin="round"/>
<path d="M508.2 266.4C509.0 267.0 511.5 269.9 513.0 270.0C514.5 270.1 516.3 267.5 517.0 267.0" fill="none" stroke="#404040" stroke-width="1.2" stroke-linecap="round" stroke-linejoin="round"/>
<path d="M492.0 285.0C492.8 285.7 496.5 287.5 497.0 289.0C497.5 290.5 495.3 293.2 495.0 294.0" fill="none" stroke="#404040" stroke-width="2.6" stroke-linecap="round" stroke-linejoin="round"/>
<path d="M492.0 285.0C492.8 285.7 496.5 287.5 497.0 289.0C497.5 290.5 495.3 293.2 495.0 294.0" fill="none" stroke="#5c5c5c" stroke-width="0.9099999999999999" stroke-linecap="round" stroke-linejoin="round"/>
<path d="M462.0 281.0C463.3 280.3 467.3 276.8 470.0 277.0C472.7 277.2 476.3 279.8 478.0 282.0C479.7 284.2 480.7 287.7 480.0 290.0C479.3 292.3 476.0 295.7 474.0 296.0C472.0 296.3 469.3 294.0 468.0 292.0C466.7 290.0 466.3 285.3 466.0 284.0" fill="none" stroke="#4d4d4d" stroke-width="1.1" stroke-linecap="round" stroke-linejoin="round"/>
<path d="M480.0 274.0C480.7 275.0 483.5 277.3 484.0 280.0C484.5 282.7 482.7 287.3 483.0 290.0C483.3 292.7 485.5 295.0 486.0 296.0" fill="none" stroke="#4d4d4d" stroke-width="1.6" stroke-linecap="round" stroke-linejoin="round"/>
<path d="M470.0 290.0C471.0 289.3 473.7 286.0 476.0 286.0C478.3 286.0 482.3 288.0 484.0 290.0C485.7 292.0 486.7 296.0 486.0 298.0C485.3 300.0 481.0 301.3 480.0 302.0" fill="none" stroke="#404040" stroke-width="1.1" stroke-linecap="round" stroke-linejoin="round"/>
<path d="M480.0 300.0C482.0 299.3 488.7 295.7 492.0 296.0C495.3 296.3 497.9 300.3 500.0 302.0C502.1 303.7 504.1 305.3 504.9 306.0" fill="none" stroke="#404040" stroke-width="1.0" stroke-linecap="round" stroke-linejoin="round"/>
<path d="M460.0 290.0C461.0 291.0 464.0 294.3 466.0 296.0C468.0 297.7 470.0 299.7 472.0 300.0C474.0 300.3 477.0 298.3 478.0 298.0" fill="none" stroke="#4d4d4d" stroke-width="1.0" stroke-linecap="round" stroke-linejoin="round"/>
<path d="M426.2 295.1C428.5 294.2 435.4 291.6 440.0 289.5C444.6 287.4 451.8 283.9 454.1 282.8" fill="none" stroke="#2a2a2a" stroke-width="5.2" stroke-linecap="round" stroke-linejoin="round"/>
<path d="M426.2 295.1C428.5 294.2 435.4 291.6 440.0 289.5C444.6 287.4 451.8 283.9 454.1 282.8" fill="none" stroke="#404040" stroke-width="4.2" stroke-linecap="round" stroke-linejoin="round"/>
<path d="M426.2 295.1C428.5 294.2 435.4 291.6 440.0 289.5C444.6 287.4 451.8 283.9 454.1 282.8" fill="none" stroke="#5c5c5c" stroke-width="1.47" stroke-linecap="round" stroke-linejoin="round"/>
<path d="M429.5 302.5C432.4 301.6 441.0 298.6 447.0 297.0C453.0 295.4 462.5 293.3 465.6 292.6" fill="none" stroke="#2a2a2a" stroke-width="5.4" stroke-linecap="round" stroke-linejoin="round"/>
<path d="M429.5 302.5C432.4 301.6 441.0 298.6 447.0 297.0C453.0 295.4 462.5 293.3 465.6 292.6" fill="none" stroke="#4d4d4d" stroke-width="4.4" stroke-linecap="round" stroke-linejoin="round"/>
<path d="M429.5 302.5C432.4 301.6 441.0 298.6 447.0 297.0C453.0 295.4 462.5 293.3 465.6 292.6" fill="none" stroke="#5c5c5c" stroke-width="1.54" stroke-linecap="round" stroke-linejoin="round"/>
<path d="M432.0 306.5C434.7 305.9 443.0 304.1 448.0 303.0C453.0 301.9 459.7 300.5 462.0 300.0" fill="none" stroke="#2a2a2a" stroke-width="4.2" stroke-linecap="round" stroke-linejoin="round"/>
<path d="M432.0 306.5C434.7 305.9 443.0 304.1 448.0 303.0C453.0 301.9 459.7 300.5 462.0 300.0" fill="none" stroke="#404040" stroke-width="3.2" stroke-linecap="round" stroke-linejoin="round"/>
<path d="M432.0 306.5C434.7 305.9 443.0 304.1 448.0 303.0C453.0 301.9 459.7 300.5 462.0 300.0" fill="none" stroke="#4d4d4d" stroke-width="1.1199999999999999" stroke-linecap="round" stroke-linejoin="round"/>
<path d="M454.0 307.4C455.8 306.9 461.2 305.1 465.0 304.5C468.8 303.9 475.0 304.1 477.0 304.0" fill="none" stroke="#2a2a2a" stroke-width="5.0" stroke-linecap="round" stroke-linejoin="round"/>
<path d="M454.0 307.4C455.8 306.9 461.2 305.1 465.0 304.5C468.8 303.9 475.0 304.1 477.0 304.0" fill="none" stroke="#4d4d4d" stroke-width="4.0" stroke-linecap="round" stroke-linejoin="round"/>
<path d="M454.0 307.4C455.8 306.9 461.2 305.1 465.0 304.5C468.8 303.9 475.0 304.1 477.0 304.0" fill="none" stroke="#5c5c5c" stroke-width="1.4" stroke-linecap="round" stroke-linejoin="round"/>
<path d="M462.0 297.0C463.3 297.7 467.7 299.2 470.0 301.0C472.3 302.8 475.0 306.8 476.0 308.0" fill="none" stroke="#404040" stroke-width="3.4" stroke-linecap="round" stroke-linejoin="round"/>
<path d="M462.0 297.0C463.3 297.7 467.7 299.2 470.0 301.0C472.3 302.8 475.0 306.8 476.0 308.0" fill="none" stroke="#5c5c5c" stroke-width="1.19" stroke-linecap="round" stroke-linejoin="round"/>
<path d="M454.0 309.0C456.0 309.1 462.0 308.8 466.0 309.5C470.0 310.2 476.0 312.4 478.0 313.0" fill="none" stroke="#404040" stroke-width="3.0" stroke-linecap="round" stroke-linejoin="round"/>
<path d="M454.0 309.0C456.0 309.1 462.0 308.8 466.0 309.5C470.0 310.2 476.0 312.4 478.0 313.0" fill="none" stroke="#4d4d4d" stroke-width="1.0499999999999998" stroke-linecap="round" stroke-linejoin="round"/>
<path d="M444.0 290.0C445.0 291.7 448.0 297.3 450.0 300.0C452.0 302.7 455.0 305.0 456.0 306.0" fill="none" stroke="#404040" stroke-width="1.2" stroke-linecap="round" stroke-linejoin="round"/>
<ellipse cx="411" cy="310" rx="4.8" ry="7" fill="none" stroke="#404040" stroke-width="3" transform="rotate(-20 411 310)"/>
<ellipse cx="417.5" cy="307" rx="3.8" ry="5.4" fill="none" stroke="#4d4d4d" stroke-width="2.6" transform="rotate(-20 417.5 307)"/>
<path d="M416.2 299.5C417.0 299.2 419.5 297.9 421.0 297.5C422.5 297.1 424.3 297.1 425.0 297.0" fill="none" stroke="#404040" stroke-width="2.2" stroke-linecap="round" stroke-linejoin="round"/>
<ellipse cx="488.5" cy="314" rx="6" ry="3.6" fill="none" stroke="#404040" stroke-width="1.6"/>
<ellipse cx="488.5" cy="317" rx="5" ry="3" fill="none" stroke="#4d4d4d" stroke-width="1.2"/>
<path d="M482.6 274.2C482.7 275.0 482.9 277.3 483.0 279.0C483.1 280.7 483.2 283.6 483.3 284.5" fill="none" stroke="#646464" stroke-width="3.0" stroke-linecap="round" stroke-linejoin="round"/>
<path d="M421.0 300.0C421.9 299.5 424.9 296.7 426.2 297.0C427.5 297.3 428.5 301.2 429.0 302.0" fill="none" stroke="#404040" stroke-width="2.0" stroke-linecap="round" stroke-linejoin="round"/>
<ellipse cx="433" cy="324" rx="8" ry="9.5" fill="none" stroke="#404040" stroke-width="3"/>
<ellipse cx="437" cy="326" rx="6" ry="7" fill="none" stroke="#4d4d4d" stroke-width="1.4"/>
<ellipse cx="435" cy="323" rx="3.6" ry="4.2" fill="none" stroke="#5c5c5c" stroke-width="1"/>
<path d="M428.0 312.0C429.0 313.0 432.0 317.5 434.0 318.0C436.0 318.5 439.0 315.5 440.0 315.0" fill="none" stroke="#404040" stroke-width="2.0" stroke-linecap="round" stroke-linejoin="round"/>
<path d="M444.0 312.0C444.5 313.0 446.7 315.7 447.0 318.0C447.3 320.3 446.2 324.7 446.0 326.0" fill="none" stroke="#4d4d4d" stroke-width="1.0" stroke-linecap="round" stroke-linejoin="round"/>
<path d="M447.5 326.0C446.9 325.6 445.2 323.7 444.0 323.5C442.8 323.3 441.2 323.9 440.0 325.0C438.8 326.1 437.5 328.2 437.0 330.0C436.5 331.8 436.3 334.4 437.0 336.0C437.7 337.6 439.4 339.0 441.0 339.5C442.6 340.0 445.2 339.8 446.5 339.0C447.8 338.2 448.6 335.7 449.0 335.0" fill="none" stroke="#e8730e" stroke-width="2.4" stroke-linecap="round" stroke-linejoin="round"/>
<path d="M441.0 326.0C441.8 325.8 444.7 324.2 446.0 324.5C447.3 324.8 448.8 326.8 449.0 328.0C449.2 329.2 448.2 331.3 447.0 332.0C445.8 332.7 442.8 332.0 442.0 332.0" fill="none" stroke="#e8730e" stroke-width="1.6" stroke-linecap="round" stroke-linejoin="round"/>
<path d="M441.0 333.0 L445.0 336.0" fill="none" stroke="#e8e8e8" stroke-width="1.6" stroke-linecap="round" stroke-linejoin="round"/>
<path d="M449.5 337.0C449.8 336.5 450.5 334.8 451.0 334.0C451.5 333.2 452.2 332.3 452.5 332.0" fill="none" stroke="#c0c0c0" stroke-width="2.2" stroke-linecap="round" stroke-linejoin="round"/>
<path d="M449.5 337.0C449.8 336.5 450.5 334.8 451.0 334.0C451.5 333.2 452.2 332.3 452.5 332.0" fill="none" stroke="#e8e8e8" stroke-width="0.8" stroke-linecap="round" stroke-linejoin="round"/>
<path d="M447.5 318.9C448.4 318.2 451.2 316.0 453.0 315.0C454.8 314.0 456.7 313.4 458.0 313.0C459.3 312.6 460.2 312.4 460.7 312.3" fill="none" stroke="#b85400" stroke-width="3.6" stroke-linecap="round" stroke-linejoin="round"/>
<path d="M447.5 318.9C448.4 318.2 451.2 316.0 453.0 315.0C454.8 314.0 456.7 313.4 458.0 313.0C459.3 312.6 460.2 312.4 460.7 312.3" fill="none" stroke="#e8730e" stroke-width="2.6" stroke-linecap="round" stroke-linejoin="round"/>
<path d="M447.5 318.9C448.4 318.2 451.2 316.0 453.0 315.0C454.8 314.0 456.7 313.4 458.0 313.0C459.3 312.6 460.2 312.4 460.7 312.3" fill="none" stroke="#ff9a3a" stroke-width="0.9099999999999999" stroke-linecap="round" stroke-linejoin="round"/>
<path d="M460.7 312.3C461.1 312.9 461.6 314.4 463.0 316.0C464.4 317.6 467.9 321.1 468.9 322.1" fill="none" stroke="#e8730e" stroke-width="2.2" stroke-linecap="round" stroke-linejoin="round"/>
<path d="M468.9 322.1C469.6 321.8 471.8 319.5 473.0 320.0C474.2 320.5 475.1 324.1 476.0 325.0C476.9 325.9 478.2 325.3 478.7 325.4" fill="none" stroke="#b85400" stroke-width="3.4" stroke-linecap="round" stroke-linejoin="round"/>
<path d="M468.9 322.1C469.6 321.8 471.8 319.5 473.0 320.0C474.2 320.5 475.1 324.1 476.0 325.0C476.9 325.9 478.2 325.3 478.7 325.4" fill="none" stroke="#e8730e" stroke-width="2.4" stroke-linecap="round" stroke-linejoin="round"/>
<path d="M468.9 322.1C469.6 321.8 471.8 319.5 473.0 320.0C474.2 320.5 475.1 324.1 476.0 325.0C476.9 325.9 478.2 325.3 478.7 325.4" fill="none" stroke="#ff9a3a" stroke-width="0.84" stroke-linecap="round" stroke-linejoin="round"/>
<path d="M478.7 325.4C479.2 324.7 481.1 320.9 482.0 321.0C482.9 321.1 482.9 324.7 484.0 326.0C485.1 327.3 487.8 328.2 488.5 328.7" fill="none" stroke="#e8730e" stroke-width="2.2" stroke-linecap="round" stroke-linejoin="round"/>
<path d="M488.5 328.7C489.4 328.1 491.8 326.6 494.0 325.0C496.2 323.4 500.3 319.9 501.6 318.9" fill="none" stroke="#e8730e" stroke-width="2.0" stroke-linecap="round" stroke-linejoin="round"/>
<path d="M470.5 314.0 L471.5 318.0" fill="none" stroke="#e6e6e6" stroke-width="2.2" stroke-linecap="round" stroke-linejoin="round"/>
<path d="M480.5 322.0 L482.0 326.0" fill="none" stroke="#e6e6e6" stroke-width="2.2" stroke-linecap="round" stroke-linejoin="round"/>
<path d="M487.0 328.0 L489.5 330.5" fill="none" stroke="#dadada" stroke-width="2.2" stroke-linecap="round" stroke-linejoin="round"/>
<path d="M458.0 318.0C458.7 319.0 461.7 322.0 462.0 324.0C462.3 326.0 460.3 329.0 460.0 330.0" fill="none" stroke="#404040" stroke-width="2.4" stroke-linecap="round" stroke-linejoin="round"/>
<path d="M466.0 328.0 L470.0 334.0" fill="none" stroke="#4d4d4d" stroke-width="2.2" stroke-linecap="round" stroke-linejoin="round"/>
<path d="M444.3 346.7C445.6 345.8 449.4 342.2 452.0 341.0C454.6 339.8 457.2 339.9 460.0 339.5C462.8 339.1 466.1 339.1 468.9 338.5C471.7 337.9 474.3 335.4 477.0 336.0C479.7 336.6 483.8 340.8 485.2 341.8" fill="none" stroke="#404040" stroke-width="1.6" stroke-linecap="round" stroke-linejoin="round"/>
<path d="M468.0 336.0C469.0 336.7 472.0 338.8 474.0 340.0C476.0 341.2 479.0 342.5 480.0 343.0" fill="none" stroke="#404040" stroke-width="3.0" stroke-linecap="round" stroke-linejoin="round"/>
<path d="M468.0 336.0C469.0 336.7 472.0 338.8 474.0 340.0C476.0 341.2 479.0 342.5 480.0 343.0" fill="none" stroke="#4d4d4d" stroke-width="1.0499999999999998" stroke-linecap="round" stroke-linejoin="round"/>
<path d="M474.0 333.0C474.7 333.8 476.3 336.8 478.0 338.0C479.7 339.2 483.0 339.7 484.0 340.0" fill="none" stroke="#4d4d4d" stroke-width="2.4" stroke-linecap="round" stroke-linejoin="round"/>
<path d="M474.0 333.0C474.7 333.8 476.3 336.8 478.0 338.0C479.7 339.2 483.0 339.7 484.0 340.0" fill="none" stroke="#5c5c5c" stroke-width="0.84" stroke-linecap="round" stroke-linejoin="round"/>
<path d="M452.0 341.0C451.3 341.8 449.7 344.7 448.0 346.0C446.3 347.3 443.0 348.5 442.0 349.0" fill="none" stroke="#4d4d4d" stroke-width="2.0" stroke-linecap="round" stroke-linejoin="round"/>
<path d="M456.0 330.0C457.0 331.0 459.9 334.6 462.0 336.0C464.1 337.4 467.8 338.1 468.9 338.5" fill="none" stroke="#404040" stroke-width="1.1" stroke-linecap="round" stroke-linejoin="round"/>
<path d="M478.0 313.0C478.3 314.2 479.0 317.2 480.0 320.0C481.0 322.8 484.0 327.0 484.0 330.0C484.0 333.0 480.7 336.7 480.0 338.0" fill="none" stroke="#404040" stroke-width="1.0" stroke-linecap="round" stroke-linejoin="round"/>
<path d="M504.0 296.0C504.8 297.0 507.8 299.7 509.0 302.0C510.2 304.3 511.2 307.3 511.0 310.0C510.8 312.7 508.5 316.7 508.0 318.0" fill="none" stroke="#404040" stroke-width="2.6" stroke-linecap="round" stroke-linejoin="round"/>
<path d="M500.0 308.0C500.8 309.0 503.0 312.3 505.0 314.0C507.0 315.7 510.2 318.0 512.0 318.0C513.8 318.0 515.3 314.7 516.0 314.0" fill="none" stroke="#4d4d4d" stroke-width="2.4" stroke-linecap="round" stroke-linejoin="round"/>
<path d="M512.0 300.0C512.7 301.0 515.5 303.7 516.0 306.0C516.5 308.3 515.2 312.7 515.0 314.0" fill="none" stroke="#404040" stroke-width="2.0" stroke-linecap="round" stroke-linejoin="round"/>
<path d="M531.4 266.9 L531.1 268.8 L529.8 270.3 L527.6 271.1 L524.7 271.4 L521.7 271.2 L518.8 270.6 L516.4 269.9 L515.0 269.2 L514.6 268.8 L515.2 268.9 L516.8 269.6 L519.0 270.8 L521.4 272.6 L523.7 274.7 L525.3 277.0 L526.1 279.2 L525.9 281.1 L524.6 282.5 L522.3 283.4 L519.5 283.7 L516.4 283.5 L513.5 282.9 L511.2 282.1 L509.7 281.5 L509.3 281.1 L510.0 281.2 L511.6 281.8 L513.8 283.1 L516.2 284.8 L518.4 286.9 L520.1 289.2 L520.9 291.4 L520.6 293.3 L519.3 294.8 L517.1 295.6 L514.2 295.9 L511.2 295.7 L508.3 295.1 L505.9 294.4 L504.5 293.7 L504.1 293.3 L504.7 293.4 L506.3 294.1 L508.5 295.3 L510.9 297.1 L513.2 299.2 L514.8 301.5 L515.6 303.7 L515.4 305.6 L514.1 307.0 L511.8 307.9 L509.0 308.2 L505.9 308.0 L503.0 307.4 L500.7 306.6 L499.2 306.0 L498.8 305.6 L499.5 305.7 L501.1 306.3 L503.3 307.6 L505.7 309.3 L507.9 311.4 L509.6 313.7 L510.4 315.9" fill="none" stroke="#4a3a30" stroke-width="3.4" stroke-linejoin="round" stroke-linecap="round"/>
<path d="M531.4 266.9 L531.1 268.8 L529.8 270.3 L527.6 271.1 L524.7 271.4 L521.7 271.2 L518.8 270.6 L516.4 269.9 L515.0 269.2 L514.6 268.8 L515.2 268.9 L516.8 269.6 L519.0 270.8 L521.4 272.6 L523.7 274.7 L525.3 277.0 L526.1 279.2 L525.9 281.1 L524.6 282.5 L522.3 283.4 L519.5 283.7 L516.4 283.5 L513.5 282.9 L511.2 282.1 L509.7 281.5 L509.3 281.1 L510.0 281.2 L511.6 281.8 L513.8 283.1 L516.2 284.8 L518.4 286.9 L520.1 289.2 L520.9 291.4 L520.6 293.3 L519.3 294.8 L517.1 295.6 L514.2 295.9 L511.2 295.7 L508.3 295.1 L505.9 294.4 L504.5 293.7 L504.1 293.3 L504.7 293.4 L506.3 294.1 L508.5 295.3 L510.9 297.1 L513.2 299.2 L514.8 301.5 L515.6 303.7 L515.4 305.6 L514.1 307.0 L511.8 307.9 L509.0 308.2 L505.9 308.0 L503.0 307.4 L500.7 306.6 L499.2 306.0 L498.8 305.6 L499.5 305.7 L501.1 306.3 L503.3 307.6 L505.7 309.3 L507.9 311.4 L509.6 313.7 L510.4 315.9" fill="none" stroke="#5a4636" stroke-width="1.0" stroke-linejoin="round" stroke-linecap="round" opacity=".8"/>
<path d="M517.6 263.1 L517.2 262.7 L517.9 262.8 L519.4 263.5 L521.6 264.7 L524.1 266.4 L526.3 268.6 L528.0 270.8 L528.8 273.0 L528.5 274.9 L527.2 276.4 L525.0 277.3 L522.1 277.6 L519.0 277.3 L516.1 276.8 L513.8 276.0 L512.4 275.3 L512.0 275.0 L512.6 275.1 L514.2 275.7 L516.4 276.9 L518.8 278.7 L521.1 280.8 L522.7 283.1 L523.5 285.3 L523.3 287.2 L521.9 288.6 L519.7 289.5 L516.9 289.8 L513.8 289.6 L510.9 289.0 L508.6 288.3 L507.1 287.6 L506.7 287.2 L507.4 287.3 L508.9 288.0 L511.1 289.2 L513.6 290.9 L515.8 293.1 L517.5 295.3 L518.3 297.5 L518.0 299.4 L516.7 300.9 L514.5 301.8 L511.6 302.1 L508.5 301.8 L505.6 301.3 L503.3 300.5 L501.9 299.8 L501.5 299.5 L502.1 299.6 L503.7 300.2 L505.9 301.4 L508.3 303.2 L510.6 305.3 L512.2 307.6 L513.0 309.8 L512.8 311.7 L511.4 313.1 L509.2 314.0 L506.4 314.3 L503.3 314.1 L500.4 313.5 L498.1 312.8 L496.6 312.1" fill="none" stroke="#b85400" stroke-width="5.6" stroke-linejoin="round" stroke-linecap="round"/>
<path d="M517.6 263.1 L517.2 262.7 L517.9 262.8 L519.4 263.5 L521.6 264.7 L524.1 266.4 L526.3 268.6 L528.0 270.8 L528.8 273.0 L528.5 274.9 L527.2 276.4 L525.0 277.3 L522.1 277.6 L519.0 277.3 L516.1 276.8 L513.8 276.0 L512.4 275.3 L512.0 275.0 L512.6 275.1 L514.2 275.7 L516.4 276.9 L518.8 278.7 L521.1 280.8 L522.7 283.1 L523.5 285.3 L523.3 287.2 L521.9 288.6 L519.7 289.5 L516.9 289.8 L513.8 289.6 L510.9 289.0 L508.6 288.3 L507.1 287.6 L506.7 287.2 L507.4 287.3 L508.9 288.0 L511.1 289.2 L513.6 290.9 L515.8 293.1 L517.5 295.3 L518.3 297.5 L518.0 299.4 L516.7 300.9 L514.5 301.8 L511.6 302.1 L508.5 301.8 L505.6 301.3 L503.3 300.5 L501.9 299.8 L501.5 299.5 L502.1 299.6 L503.7 300.2 L505.9 301.4 L508.3 303.2 L510.6 305.3 L512.2 307.6 L513.0 309.8 L512.8 311.7 L511.4 313.1 L509.2 314.0 L506.4 314.3 L503.3 314.1 L500.4 313.5 L498.1 312.8 L496.6 312.1" fill="none" stroke="#e8730e" stroke-width="4.6" stroke-linejoin="round" stroke-linecap="round"/>
<path d="M517.6 263.1 L517.2 262.7 L517.9 262.8 L519.4 263.5 L521.6 264.7 L524.1 266.4 L526.3 268.6 L528.0 270.8 L528.8 273.0 L528.5 274.9 L527.2 276.4 L525.0 277.3 L522.1 277.6 L519.0 277.3 L516.1 276.8 L513.8 276.0 L512.4 275.3 L512.0 275.0 L512.6 275.1 L514.2 275.7 L516.4 276.9 L518.8 278.7 L521.1 280.8 L522.7 283.1 L523.5 285.3 L523.3 287.2 L521.9 288.6 L519.7 289.5 L516.9 289.8 L513.8 289.6 L510.9 289.0 L508.6 288.3 L507.1 287.6 L506.7 287.2 L507.4 287.3 L508.9 288.0 L511.1 289.2 L513.6 290.9 L515.8 293.1 L517.5 295.3 L518.3 297.5 L518.0 299.4 L516.7 300.9 L514.5 301.8 L511.6 302.1 L508.5 301.8 L505.6 301.3 L503.3 300.5 L501.9 299.8 L501.5 299.5 L502.1 299.6 L503.7 300.2 L505.9 301.4 L508.3 303.2 L510.6 305.3 L512.2 307.6 L513.0 309.8 L512.8 311.7 L511.4 313.1 L509.2 314.0 L506.4 314.3 L503.3 314.1 L500.4 313.5 L498.1 312.8 L496.6 312.1" fill="none" stroke="#ff9a3a" stroke-width="1.4" stroke-linejoin="round" stroke-linecap="round" opacity=".8"/>
<path d="M519.0 262.0C519.9 262.1 523.1 261.8 524.6 262.5C526.1 263.2 527.4 265.4 528.0 266.0" fill="none" stroke="#e8730e" stroke-width="2.4" stroke-linecap="round" stroke-linejoin="round"/>
<g id="core">
<path d="M527.6 267.8C529.0 268.1 534.1 268.1 536.2 269.9C538.3 271.7 540.8 275.3 540.4 278.5C540.0 281.7 535.1 287.3 534.0 289.1" fill="none" stroke="#e8730e" stroke-width="1.4" stroke-linecap="round" stroke-linejoin="round"/>
<path d="M536.2 269.9C537.0 270.2 540.3 270.8 541.0 272.0C541.7 273.2 540.6 276.2 540.5 277.0" fill="none" stroke="#cfcfcf" stroke-width="1.0" stroke-linecap="round" stroke-linejoin="round"/>
<path d="M530.0 278.0C531.0 278.3 534.2 279.0 536.0 280.0C537.8 281.0 539.3 283.7 541.0 284.0C542.7 284.3 545.2 282.3 546.0 282.0" fill="none" stroke="#c4c4c4" stroke-width="1.1" stroke-linecap="round" stroke-linejoin="round"/>
<ellipse cx="548" cy="279" rx="4.8" ry="4" fill="none" stroke="#777" stroke-width="1.8"/>
<ellipse cx="552.5" cy="281.5" rx="4" ry="3.4" fill="none" stroke="#8a8a8a" stroke-width="1.4"/>
<path d="M544.7 276.3C546.5 277.4 552.0 281.1 555.4 282.7C558.8 284.3 561.1 285.1 565.0 286.0C568.9 286.9 576.5 287.7 578.8 288.0" fill="none" stroke="#8a8a8a" stroke-width="1.1" stroke-linecap="round" stroke-linejoin="round"/>
<path d="M540.0 283.0C541.3 283.7 545.3 286.3 548.0 287.0C550.7 287.7 553.7 286.5 556.0 287.0C558.3 287.5 561.0 289.5 562.0 290.0" fill="none" stroke="#b0b0b0" stroke-width="1.2" stroke-linecap="round" stroke-linejoin="round"/>
<path d="M549.0 296.6C551.2 297.5 557.7 300.1 562.0 302.0C566.3 303.9 569.7 306.7 574.6 308.3C579.5 309.9 588.8 311.0 591.6 311.5" fill="none" stroke="#b85400" stroke-width="3.8" stroke-linecap="round" stroke-linejoin="round"/>
<path d="M549.0 296.6C551.2 297.5 557.7 300.1 562.0 302.0C566.3 303.9 569.7 306.7 574.6 308.3C579.5 309.9 588.8 311.0 591.6 311.5" fill="none" stroke="#e8730e" stroke-width="2.8" stroke-linecap="round" stroke-linejoin="round"/>
<path d="M549.0 296.6C551.2 297.5 557.7 300.1 562.0 302.0C566.3 303.9 569.7 306.7 574.6 308.3C579.5 309.9 588.8 311.0 591.6 311.5" fill="none" stroke="#ff9a3a" stroke-width="0.9799999999999999" stroke-linecap="round" stroke-linejoin="round"/>
<path d="M578.8 295.5C578.8 296.4 578.9 299.2 578.5 301.0C578.1 302.8 577.0 305.3 576.7 306.2" fill="none" stroke="#b85400" stroke-width="3.6" stroke-linecap="round" stroke-linejoin="round"/>
<path d="M578.8 295.5C578.8 296.4 578.9 299.2 578.5 301.0C578.1 302.8 577.0 305.3 576.7 306.2" fill="none" stroke="#e8730e" stroke-width="2.6" stroke-linecap="round" stroke-linejoin="round"/>
<path d="M578.8 295.5C578.8 296.4 578.9 299.2 578.5 301.0C578.1 302.8 577.0 305.3 576.7 306.2" fill="none" stroke="#ff9a3a" stroke-width="0.9099999999999999" stroke-linecap="round" stroke-linejoin="round"/>
<polygon points="576.0,297.5 579.5,290.0 582.5,298.0" fill="#ffa040"/>
<path d="M531.9 293.4C534.1 293.8 541.1 294.6 545.0 296.0C548.9 297.4 551.2 298.4 555.4 301.9C559.6 305.4 567.8 314.3 570.3 316.8" fill="none" stroke="#b85400" stroke-width="3.4" stroke-linecap="round" stroke-linejoin="round"/>
<path d="M531.9 293.4C534.1 293.8 541.1 294.6 545.0 296.0C548.9 297.4 551.2 298.4 555.4 301.9C559.6 305.4 567.8 314.3 570.3 316.8" fill="none" stroke="#e8730e" stroke-width="2.4" stroke-linecap="round" stroke-linejoin="round"/>
<path d="M531.9 293.4C534.1 293.8 541.1 294.6 545.0 296.0C548.9 297.4 551.2 298.4 555.4 301.9C559.6 305.4 567.8 314.3 570.3 316.8" fill="none" stroke="#ff9a3a" stroke-width="0.84" stroke-linecap="round" stroke-linejoin="round"/>
<path d="M529.0 290.0C530.8 290.2 536.2 290.0 540.0 291.0C543.8 292.0 547.7 294.2 552.0 296.0C556.3 297.8 561.3 300.5 566.0 302.0C570.7 303.5 577.7 304.5 580.0 305.0" fill="none" stroke="#b8b8b8" stroke-width="1.4" stroke-linecap="round" stroke-linejoin="round"/>
<path d="M570.3 316.8C571.6 317.7 575.5 320.2 578.0 322.0C580.5 323.8 583.4 327.5 585.2 327.5C587.0 327.5 588.3 323.8 589.0 322.0C589.7 320.2 590.0 318.5 589.5 316.8C589.0 315.1 586.6 312.8 586.0 312.0" fill="none" stroke="#e8730e" stroke-width="1.6" stroke-linecap="round" stroke-linejoin="round"/>
<path d="M566.0 325.4C567.5 325.5 571.8 325.6 575.0 326.0C578.2 326.4 582.4 326.3 585.2 327.5C588.0 328.7 590.2 330.9 592.0 333.0C593.8 335.1 596.0 337.7 595.9 340.3C595.8 342.9 593.4 347.4 591.6 348.8C589.8 350.2 587.1 349.4 585.0 349.0C582.9 348.6 580.8 348.0 578.8 346.7C576.8 345.4 574.4 342.8 573.0 341.0C571.6 339.2 570.8 336.8 570.3 336.0" fill="none" stroke="#e8730e" stroke-width="1.8" stroke-linecap="round" stroke-linejoin="round"/>
<path d="M568.0 323.0C569.7 323.2 574.7 323.5 578.0 324.0C581.3 324.5 585.0 324.0 588.0 326.0C591.0 328.0 595.2 332.7 596.0 336.0C596.8 339.3 593.5 344.3 593.0 346.0" fill="none" stroke="#a8a8a8" stroke-width="1.2" stroke-linecap="round" stroke-linejoin="round"/>
<path d="M542.6 333.9C543.5 333.4 545.9 331.7 548.0 331.0C550.1 330.3 552.9 329.8 555.4 329.6C557.9 329.4 560.5 329.6 563.0 330.0C565.5 330.4 568.3 330.5 570.3 331.8C572.3 333.1 573.6 335.5 575.0 338.0C576.4 340.5 578.0 344.0 578.8 346.7C579.5 349.4 579.5 351.5 579.5 354.0C579.5 356.5 579.5 359.9 578.8 361.6C578.0 363.4 576.4 363.8 575.0 364.5C573.6 365.2 571.1 365.7 570.3 365.9" fill="none" stroke="#e8730e" stroke-width="2.0" stroke-linecap="round" stroke-linejoin="round"/>
<path d="M544.0 336.0C546.0 335.3 552.0 332.3 556.0 332.0C560.0 331.7 564.7 331.7 568.0 334.0C571.3 336.3 574.7 341.7 576.0 346.0C577.3 350.3 576.0 357.7 576.0 360.0" fill="none" stroke="#c2c2c2" stroke-width="1.2" stroke-linecap="round" stroke-linejoin="round"/>
<path d="M512.7 344.6C513.9 343.7 517.5 340.4 520.0 339.0C522.5 337.6 525.6 335.7 527.6 336.0C529.6 336.3 530.9 338.9 532.0 341.0C533.1 343.1 534.2 346.0 534.0 348.8C533.8 351.6 532.1 355.1 531.0 358.0C529.9 360.9 527.9 363.7 527.6 365.9C527.3 368.1 527.9 369.6 529.0 371.0C530.1 372.4 531.3 374.2 534.0 374.4C536.7 374.6 541.4 373.1 545.0 372.0C548.6 370.9 554.2 370.3 555.4 368.0C556.6 365.7 553.4 361.2 552.0 358.0C550.6 354.8 548.1 351.6 546.8 348.8C545.5 346.0 544.7 343.5 544.0 341.0C543.3 338.5 542.8 335.1 542.6 333.9" fill="none" stroke="#e8730e" stroke-width="2.0" stroke-linecap="round" stroke-linejoin="round"/>
<path d="M508.5 344.6C509.4 344.0 512.2 342.1 514.0 341.0C515.8 339.9 517.6 337.9 519.1 338.2C520.6 338.5 521.9 341.2 523.0 343.0C524.1 344.8 525.3 347.1 525.5 348.8C525.7 350.5 524.7 351.6 524.0 353.0C523.3 354.4 521.7 356.6 521.2 357.3" fill="none" stroke="#d4d4d4" stroke-width="1.4" stroke-linecap="round" stroke-linejoin="round"/>
<path d="M510.0 347.0C511.0 347.8 514.0 351.5 516.0 352.0C518.0 352.5 521.0 350.3 522.0 350.0" fill="none" stroke="#e2e2e2" stroke-width="1.2" stroke-linecap="round" stroke-linejoin="round"/>
<path d="M531.9 293.4C531.2 294.5 528.1 297.6 528.0 300.0C527.9 302.4 529.7 305.7 531.0 308.0C532.3 310.3 535.7 311.7 536.0 314.0C536.3 316.3 534.2 319.3 533.0 322.0C531.8 324.7 529.3 327.3 529.0 330.0C528.7 332.7 530.7 336.7 531.0 338.0" fill="none" stroke="#e8730e" stroke-width="1.8" stroke-linecap="round" stroke-linejoin="round"/>
<path d="M534.0 296.0C533.7 297.7 531.3 302.7 532.0 306.0C532.7 309.3 537.5 312.7 538.0 316.0C538.5 319.3 535.7 322.7 535.0 326.0C534.3 329.3 534.2 334.3 534.0 336.0" fill="none" stroke="#c9c9c9" stroke-width="1.3" stroke-linecap="round" stroke-linejoin="round"/>
<path d="M538.0 300.0C539.3 301.0 544.0 303.7 546.0 306.0C548.0 308.3 549.7 311.3 550.0 314.0C550.3 316.7 548.3 320.7 548.0 322.0" fill="none" stroke="#e8730e" stroke-width="1.4" stroke-linecap="round" stroke-linejoin="round"/>
<path d="M545.0 304.0C546.2 305.0 549.8 307.7 552.0 310.0C554.2 312.3 556.3 315.3 558.0 318.0C559.7 320.7 561.3 324.7 562.0 326.0" fill="none" stroke="#b4b4b4" stroke-width="1.1" stroke-linecap="round" stroke-linejoin="round"/>
<path d="M548.0 318.0C549.3 318.7 553.3 321.3 556.0 322.0C558.7 322.7 561.6 322.9 564.0 322.0C566.4 321.1 569.2 317.7 570.3 316.8" fill="none" stroke="#e8730e" stroke-width="1.5" stroke-linecap="round" stroke-linejoin="round"/>
<path d="M540.0 322.0C541.3 322.7 545.4 324.7 548.0 326.0C550.6 327.3 554.2 329.0 555.4 329.6" fill="none" stroke="#d8d8d8" stroke-width="1.4" stroke-linecap="round" stroke-linejoin="round"/>
<path d="M544.0 338.0C545.0 337.3 548.0 334.8 550.0 334.0C552.0 333.2 555.0 333.2 556.0 333.0" fill="none" stroke="#cfcfcf" stroke-width="2.2" stroke-linecap="round" stroke-linejoin="round"/>
<path d="M544.0 338.0C545.0 337.3 548.0 334.8 550.0 334.0C552.0 333.2 555.0 333.2 556.0 333.0" fill="none" stroke="#f4f4f4" stroke-width="0.8" stroke-linecap="round" stroke-linejoin="round"/>
<path d="M527.0 312.0C527.7 313.0 530.5 315.7 531.0 318.0C531.5 320.3 530.2 324.7 530.0 326.0" fill="none" stroke="#e2e2e2" stroke-width="1.8" stroke-linecap="round" stroke-linejoin="round"/>
<path d="M536.0 350.0C536.8 351.0 539.0 354.3 541.0 356.0C543.0 357.7 545.5 359.7 548.0 360.0C550.5 360.3 554.7 358.3 556.0 358.0" fill="none" stroke="#e8730e" stroke-width="1.5" stroke-linecap="round" stroke-linejoin="round"/>
<path d="M530.0 362.0C531.3 362.7 535.0 365.3 538.0 366.0C541.0 366.7 545.0 366.7 548.0 366.0C551.0 365.3 554.7 362.7 556.0 362.0" fill="none" stroke="#c4c4c4" stroke-width="1.1" stroke-linecap="round" stroke-linejoin="round"/>
<path d="M534.0 368.0C535.0 369.3 537.7 374.3 540.0 376.0C542.3 377.7 545.3 378.3 548.0 378.0C550.7 377.7 554.0 375.7 556.0 374.0C558.0 372.3 559.3 369.0 560.0 368.0" fill="none" stroke="#e8730e" stroke-width="1.6" stroke-linecap="round" stroke-linejoin="round"/>
<path d="M538.0 372.0C539.3 372.5 543.3 375.2 546.0 375.0C548.7 374.8 552.7 371.7 554.0 371.0" fill="none" stroke="#b85400" stroke-width="1.3" stroke-linecap="round" stroke-linejoin="round"/>
<path d="M556.0 340.0C557.0 341.3 561.3 345.0 562.0 348.0C562.7 351.0 559.7 355.0 560.0 358.0C560.3 361.0 563.3 364.7 564.0 366.0" fill="none" stroke="#e8730e" stroke-width="1.4" stroke-linecap="round" stroke-linejoin="round"/>
<path d="M560.0 342.0C561.0 343.7 565.0 348.7 566.0 352.0C567.0 355.3 566.0 360.3 566.0 362.0" fill="none" stroke="#b0b0b0" stroke-width="1.1" stroke-linecap="round" stroke-linejoin="round"/>
<path d="M574.0 318.0C575.0 317.7 578.0 315.7 580.0 316.0C582.0 316.3 585.0 319.3 586.0 320.0" fill="none" stroke="#8f8f8f" stroke-width="2.2" stroke-linecap="round" stroke-linejoin="round"/>
<path d="M560.0 334.0C561.0 334.7 564.0 337.7 566.0 338.0C568.0 338.3 571.0 336.3 572.0 336.0" fill="none" stroke="#9a9a9a" stroke-width="2.0" stroke-linecap="round" stroke-linejoin="round"/>
<path d="M517.0 319.0C517.4 322.6 519.5 333.2 519.1 340.3C518.8 347.4 514.9 354.5 514.9 361.6C514.9 368.7 518.4 379.4 519.1 383.0" fill="none" stroke="#6a6a6a" stroke-width="1.3" stroke-linecap="round" stroke-linejoin="round"/>
<path d="M521.0 322.0C521.3 325.0 523.2 334.3 523.0 340.0C522.8 345.7 519.8 350.7 520.0 356.0C520.2 361.3 523.7 367.3 524.0 372.0C524.3 376.7 522.3 382.0 522.0 384.0" fill="none" stroke="#8a8a8a" stroke-width="1.0" stroke-linecap="round" stroke-linejoin="round"/>
<path d="M513.0 330.0C513.5 332.3 516.2 340.0 516.0 344.0C515.8 348.0 512.7 352.3 512.0 354.0" fill="none" stroke="#777" stroke-width="1.6" stroke-linecap="round" stroke-linejoin="round"/>
<path d="M524.0 360.0C525.0 362.0 529.3 368.3 530.0 372.0C530.7 375.7 528.3 380.3 528.0 382.0" fill="none" stroke="#6a6a6a" stroke-width="1.0" stroke-linecap="round" stroke-linejoin="round"/>
<path d="M591.6 333.9C592.7 334.4 595.9 335.6 598.0 337.0C600.1 338.4 603.3 341.5 604.4 342.4" fill="none" stroke="#c9c9c9" stroke-width="1.0" stroke-linecap="round" stroke-linejoin="round"/>
<path d="M586.0 340.0C586.7 341.0 590.0 344.0 590.0 346.0C590.0 348.0 586.0 349.7 586.0 352.0C586.0 354.3 587.7 358.3 590.0 360.0C592.3 361.7 598.3 361.7 600.0 362.0" fill="none" stroke="#bdbdbd" stroke-width="1.0" stroke-linecap="round" stroke-linejoin="round"/>
<path d="M600.0 362.0C601.0 361.3 605.3 359.7 606.0 358.0C606.7 356.3 605.7 353.3 604.4 352.0C603.1 350.7 599.1 350.3 598.0 350.0" fill="none" stroke="#c9c9c9" stroke-width="1.0" stroke-linecap="round" stroke-linejoin="round"/>
</g>
<use href="#core" transform="translate(1.8,-1.3)" opacity=".5"/>
<use href="#core" transform="translate(-1.5,1.6)" opacity=".45"/>
<path d="M568.0 350.0C568.8 351.1 571.5 354.6 572.8 356.4C574.1 358.2 573.5 359.6 576.0 360.7C578.5 361.8 585.7 361.9 587.7 362.8C589.8 363.7 588.2 365.5 588.3 366.0" fill="none" stroke="#c4c4c4" stroke-width="1.0" stroke-linecap="round" stroke-linejoin="round"/>
<path d="M591.4 350.0C591.7 351.6 592.1 357.3 593.0 359.6C593.9 361.9 594.5 364.0 596.8 363.9C599.1 363.8 603.8 359.7 606.9 359.1C610.0 358.5 613.5 360.6 615.4 360.1C617.3 359.7 618.4 358.1 618.4 356.4C618.4 354.7 615.9 351.1 615.4 350.0" fill="none" stroke="#c9c9c9" stroke-width="1.0" stroke-linecap="round" stroke-linejoin="round"/>
<polygon points="565.5,362.0 572.0,361.5 574.5,366.0 571.0,370.0 566.0,368.5" fill="#58b4ea"/>
<path d="M560.0 377.7C561.8 376.6 566.6 372.9 570.7 371.3C574.8 369.7 582.2 368.6 584.5 368.1" fill="none" stroke="#58b4ea" stroke-width="1.6" stroke-linecap="round" stroke-linejoin="round"/>
<path d="M562.0 381.0C563.7 380.2 568.7 377.3 572.0 376.0C575.3 374.7 580.3 373.5 582.0 373.0" fill="none" stroke="#4798d2" stroke-width="1.3" stroke-linecap="round" stroke-linejoin="round"/>
<path d="M576.0 382.0C575.9 383.2 575.6 386.7 575.5 389.0C575.4 391.3 574.9 395.2 575.5 395.8C576.1 396.4 578.6 393.1 579.2 392.6" fill="none" stroke="#58b4ea" stroke-width="1.6" stroke-linecap="round" stroke-linejoin="round"/>
<path d="M580.3 391.6C582.8 391.4 590.1 390.0 595.2 390.5C600.4 391.0 606.1 393.4 611.2 394.8C616.4 396.2 622.2 398.6 626.1 399.0C630.0 399.4 633.2 397.2 634.6 396.9" fill="none" stroke="#2c6ea3" stroke-width="5.0" stroke-linecap="round" stroke-linejoin="round"/>
<path d="M580.3 391.6C582.8 391.4 590.1 390.0 595.2 390.5C600.4 391.0 606.1 393.4 611.2 394.8C616.4 396.2 622.2 398.6 626.1 399.0C630.0 399.4 633.2 397.2 634.6 396.9" fill="none" stroke="#58b4ea" stroke-width="4.0" stroke-linecap="round" stroke-linejoin="round"/>
<path d="M580.3 391.6C582.8 391.4 590.1 390.0 595.2 390.5C600.4 391.0 606.1 393.4 611.2 394.8C616.4 396.2 622.2 398.6 626.1 399.0C630.0 399.4 633.2 397.2 634.6 396.9" fill="none" stroke="#4798d2" stroke-width="1.4" stroke-linecap="round" stroke-linejoin="round"/>
<path d="M586.7 385.2C589.4 385.2 597.1 384.0 602.6 385.2C608.1 386.4 614.7 390.7 619.7 392.6C624.7 394.6 630.4 396.2 632.5 396.9" fill="none" stroke="#2c6ea3" stroke-width="4.6" stroke-linecap="round" stroke-linejoin="round"/>
<path d="M586.7 385.2C589.4 385.2 597.1 384.0 602.6 385.2C608.1 386.4 614.7 390.7 619.7 392.6C624.7 394.6 630.4 396.2 632.5 396.9" fill="none" stroke="#4798d2" stroke-width="3.6" stroke-linecap="round" stroke-linejoin="round"/>
<path d="M586.7 385.2C589.4 385.2 597.1 384.0 602.6 385.2C608.1 386.4 614.7 390.7 619.7 392.6C624.7 394.6 630.4 396.2 632.5 396.9" fill="none" stroke="#2c6ea3" stroke-width="1.26" stroke-linecap="round" stroke-linejoin="round"/>
<path d="M584.5 366.6C587.1 366.4 594.4 365.4 600.0 365.2C605.6 365.0 612.2 365.4 618.0 365.6C623.8 365.8 631.8 366.3 634.6 366.4" fill="none" stroke="#2c6ea3" stroke-width="4.8" stroke-linecap="round" stroke-linejoin="round"/>
<path d="M584.5 366.6C587.1 366.4 594.4 365.4 600.0 365.2C605.6 365.0 612.2 365.4 618.0 365.6C623.8 365.8 631.8 366.3 634.6 366.4" fill="none" stroke="#58b4ea" stroke-width="3.8" stroke-linecap="round" stroke-linejoin="round"/>
<path d="M584.5 366.6C587.1 366.4 594.4 365.4 600.0 365.2C605.6 365.0 612.2 365.4 618.0 365.6C623.8 365.8 631.8 366.3 634.6 366.4" fill="none" stroke="#4798d2" stroke-width="1.3299999999999998" stroke-linecap="round" stroke-linejoin="round"/>
<path d="M581.3 375.6C582.4 375.0 585.7 372.9 588.0 372.0C590.3 371.1 591.9 370.5 595.2 370.3C598.5 370.1 603.9 370.4 608.0 370.6C612.1 370.8 616.3 371.6 619.7 371.3C623.1 371.0 626.8 369.2 628.2 368.8" fill="none" stroke="#2c6ea3" stroke-width="5.0" stroke-linecap="round" stroke-linejoin="round"/>
<path d="M581.3 375.6C582.4 375.0 585.7 372.9 588.0 372.0C590.3 371.1 591.9 370.5 595.2 370.3C598.5 370.1 603.9 370.4 608.0 370.6C612.1 370.8 616.3 371.6 619.7 371.3C623.1 371.0 626.8 369.2 628.2 368.8" fill="none" stroke="#58b4ea" stroke-width="4.0" stroke-linecap="round" stroke-linejoin="round"/>
<path d="M581.3 375.6C582.4 375.0 585.7 372.9 588.0 372.0C590.3 371.1 591.9 370.5 595.2 370.3C598.5 370.1 603.9 370.4 608.0 370.6C612.1 370.8 616.3 371.6 619.7 371.3C623.1 371.0 626.8 369.2 628.2 368.8" fill="none" stroke="#9bd8ff" stroke-width="1.4" stroke-linecap="round" stroke-linejoin="round"/>
<polygon points="582.0,371.5 590.0,367.5 588.0,377.0 580.0,379.0" fill="#9bd8ff"/>
<polygon points="617.0,367.5 626.0,371.0 617.0,375.5" fill="#58b4ea"/>
<path d="M596.0 374.5C598.0 375.2 604.0 377.1 608.0 378.5C612.0 379.9 616.0 381.4 619.7 383.0C623.4 384.6 626.8 386.4 630.0 388.0C633.2 389.6 636.4 390.8 638.9 392.6C641.4 394.4 644.2 397.9 645.3 399.0" fill="none" stroke="#2c6ea3" stroke-width="6.0" stroke-linecap="round" stroke-linejoin="round"/>
<path d="M596.0 374.5C598.0 375.2 604.0 377.1 608.0 378.5C612.0 379.9 616.0 381.4 619.7 383.0C623.4 384.6 626.8 386.4 630.0 388.0C633.2 389.6 636.4 390.8 638.9 392.6C641.4 394.4 644.2 397.9 645.3 399.0" fill="none" stroke="#4798d2" stroke-width="5.0" stroke-linecap="round" stroke-linejoin="round"/>
<path d="M596.0 374.5C598.0 375.2 604.0 377.1 608.0 378.5C612.0 379.9 616.0 381.4 619.7 383.0C623.4 384.6 626.8 386.4 630.0 388.0C633.2 389.6 636.4 390.8 638.9 392.6C641.4 394.4 644.2 397.9 645.3 399.0" fill="none" stroke="#2c6ea3" stroke-width="1.75" stroke-linecap="round" stroke-linejoin="round"/>
<path d="M597.0 372.6C599.0 373.2 605.0 375.0 609.0 376.4C613.0 377.8 617.2 379.4 621.0 381.0C624.8 382.6 628.8 384.6 632.0 386.2C635.2 387.8 638.7 389.8 640.0 390.5" fill="none" stroke="#9bd8ff" stroke-width="1.1" stroke-linecap="round" stroke-linejoin="round"/>
<path d="M600.0 380.5C602.0 381.2 608.0 382.9 612.0 384.5C616.0 386.1 620.3 388.3 624.0 390.0C627.7 391.7 632.3 393.8 634.0 394.5" fill="none" stroke="#58b4ea" stroke-width="2.6" stroke-linecap="round" stroke-linejoin="round"/>
<path d="M600.0 380.5C602.0 381.2 608.0 382.9 612.0 384.5C616.0 386.1 620.3 388.3 624.0 390.0C627.7 391.7 632.3 393.8 634.0 394.5" fill="none" stroke="#4798d2" stroke-width="0.9099999999999999" stroke-linecap="round" stroke-linejoin="round"/>
<path d="M634.6 369.2C635.5 369.2 638.4 368.8 640.0 369.0C641.6 369.2 643.2 369.6 644.2 370.3C645.2 371.1 645.8 372.4 646.0 373.5C646.2 374.6 646.1 375.8 645.3 376.7C644.5 377.6 642.4 378.3 641.0 378.8C639.6 379.3 637.8 379.4 636.8 379.9C635.8 380.4 635.2 381.3 634.8 382.0C634.4 382.7 633.9 383.6 634.6 384.1C635.3 384.6 637.6 384.6 639.0 385.0C640.4 385.4 642.0 385.7 643.2 386.2C644.4 386.7 645.5 387.3 646.0 388.0C646.5 388.7 646.6 389.7 646.4 390.5C646.2 391.3 645.7 392.3 645.0 393.0C644.3 393.7 643.5 394.9 642.1 394.8C640.7 394.7 637.7 393.0 636.8 392.6" fill="none" stroke="#58b4ea" stroke-width="3.4" stroke-linecap="round" stroke-linejoin="round"/>
<path d="M637.0 369.6C638.1 369.9 642.3 370.3 643.5 371.4C644.7 372.5 645.2 374.7 644.3 376.0C643.4 377.3 639.0 378.7 638.0 379.2" fill="none" stroke="#9bd8ff" stroke-width="1.6" stroke-linecap="round" stroke-linejoin="round"/>
<path d="M636.0 384.4C637.2 384.8 641.5 385.9 643.0 387.0C644.5 388.1 645.2 389.9 645.0 391.0C644.8 392.1 642.1 393.3 641.5 393.8" fill="none" stroke="#9bd8ff" stroke-width="1.6" stroke-linecap="round" stroke-linejoin="round"/>
<path d="M645.3 378.8C646.7 378.9 651.5 378.6 653.8 379.3C656.1 380.0 658.0 380.8 659.1 383.0C660.2 385.2 660.5 389.8 660.7 392.6C660.9 395.5 661.0 398.3 660.2 400.1C659.4 401.9 657.9 403.1 655.9 403.3C653.9 403.5 650.6 402.1 648.5 401.2C646.4 400.3 644.1 398.5 643.2 398.0" fill="none" stroke="#58b4ea" stroke-width="2.4" stroke-linecap="round" stroke-linejoin="round"/>
<path d="M650.6 388.4C651.5 388.0 654.6 386.0 655.9 386.2C657.1 386.4 658.3 388.5 658.1 389.4C657.9 390.3 655.4 391.2 654.9 391.6" fill="none" stroke="#58b4ea" stroke-width="2.2" stroke-linecap="round" stroke-linejoin="round"/>
<path d="M657.0 383.5C657.4 384.9 659.3 389.3 659.6 392.0C659.9 394.7 658.8 398.2 658.6 399.5" fill="none" stroke="#9bd8ff" stroke-width="1.0" stroke-linecap="round" stroke-linejoin="round"/>
<path d="M634.6 366.0C635.0 365.5 636.1 364.1 637.0 363.0C637.9 361.9 639.5 359.8 640.0 359.1" fill="none" stroke="#58b4ea" stroke-width="1.3" stroke-linecap="round" stroke-linejoin="round"/>
<path d="M595.2 394.8C595.1 395.4 594.8 397.3 594.8 398.5C594.8 399.7 594.7 401.0 595.2 402.2C595.7 403.4 596.9 404.6 598.0 405.5C599.1 406.4 600.1 407.2 601.6 407.6C603.1 408.0 606.0 408.0 606.9 408.1" fill="none" stroke="#4798d2" stroke-width="1.8" stroke-linecap="round" stroke-linejoin="round"/>
<path d="M597.5 397.0C597.6 397.8 597.2 400.2 598.0 401.5C598.8 402.8 601.3 404.4 602.0 405.0" fill="none" stroke="#2c6ea3" stroke-width="1.3" stroke-linecap="round" stroke-linejoin="round"/>
<path d="M604.2 395.8L608 403.3" stroke="#9bd8ff" stroke-width="2.2" stroke-dasharray="1 0.8" fill="none"/>
<path d="M608.0 403.3C608.5 403.7 609.9 405.0 611.0 405.5C612.1 406.0 613.8 406.3 614.4 406.5" fill="none" stroke="#58b4ea" stroke-width="3.0" stroke-linecap="round" stroke-linejoin="round"/>
<path d="M583.0 396.5C584.2 396.2 587.7 394.8 590.0 394.5C592.3 394.2 595.8 394.5 597.0 394.5" fill="none" stroke="#58b4ea" stroke-width="2.0" stroke-linecap="round" stroke-linejoin="round"/>
<path d="M556.0 370.0C557.0 370.7 560.3 372.3 562.0 374.0C563.7 375.7 566.0 378.0 566.0 380.0C566.0 382.0 562.7 385.0 562.0 386.0" fill="none" stroke="#58b4ea" stroke-width="2.0" stroke-linecap="round" stroke-linejoin="round"/>
<path d="M548.0 378.0C548.7 379.0 550.7 382.0 552.0 384.0C553.3 386.0 555.3 389.0 556.0 390.0" fill="none" stroke="#58b4ea" stroke-width="1.6" stroke-linecap="round" stroke-linejoin="round"/>
<path d="M532.3 388.8C532.9 388.2 534.7 386.2 536.0 385.5C537.3 384.8 539.2 384.2 540.2 384.8C541.2 385.4 541.7 387.4 542.0 389.0C542.3 390.6 542.9 393.4 542.2 394.7C541.5 395.9 539.3 396.2 538.0 396.5C536.7 396.8 534.9 396.6 534.3 396.6" fill="none" stroke="#58b4ea" stroke-width="1.5" stroke-linecap="round" stroke-linejoin="round"/>
<path d="M575.6 384.8C576.6 384.1 579.8 380.6 581.4 380.9C583.0 381.2 585.3 384.5 585.0 386.8C584.7 389.1 580.4 393.4 579.5 394.7" fill="none" stroke="#58b4ea" stroke-width="2.2" stroke-linecap="round" stroke-linejoin="round"/>
<path d="M555.9 384.8C556.6 385.2 558.7 386.0 560.0 387.0C561.3 388.0 563.4 389.2 563.8 390.7C564.2 392.2 563.2 394.4 562.5 396.0C561.8 397.6 559.5 399.2 559.8 400.5C560.0 401.8 562.4 402.8 564.0 403.5C565.6 404.2 568.8 404.3 569.7 404.5" fill="none" stroke="#2c6ea3" stroke-width="4.6" stroke-linecap="round" stroke-linejoin="round"/>
<path d="M555.9 384.8C556.6 385.2 558.7 386.0 560.0 387.0C561.3 388.0 563.4 389.2 563.8 390.7C564.2 392.2 563.2 394.4 562.5 396.0C561.8 397.6 559.5 399.2 559.8 400.5C560.0 401.8 562.4 402.8 564.0 403.5C565.6 404.2 568.8 404.3 569.7 404.5" fill="none" stroke="#58b4ea" stroke-width="3.6" stroke-linecap="round" stroke-linejoin="round"/>
<path d="M555.9 384.8C556.6 385.2 558.7 386.0 560.0 387.0C561.3 388.0 563.4 389.2 563.8 390.7C564.2 392.2 563.2 394.4 562.5 396.0C561.8 397.6 559.5 399.2 559.8 400.5C560.0 401.8 562.4 402.8 564.0 403.5C565.6 404.2 568.8 404.3 569.7 404.5" fill="none" stroke="#9bd8ff" stroke-width="1.26" stroke-linecap="round" stroke-linejoin="round"/>
<path d="M563.8 394.7C564.3 395.4 566.0 397.4 567.0 399.0C568.0 400.6 569.2 403.6 569.7 404.5" fill="none" stroke="#9bd8ff" stroke-width="2.0" stroke-linecap="round" stroke-linejoin="round"/>
<path d="M552.0 386.0C552.7 387.0 555.7 390.0 556.0 392.0C556.3 394.0 554.3 397.0 554.0 398.0" fill="none" stroke="#58b4ea" stroke-width="2.0" stroke-linecap="round" stroke-linejoin="round"/>
<path d="M520.5 434.0C519.2 435.2 515.3 438.7 513.0 441.0C510.7 443.3 509.0 444.9 506.8 447.7C504.6 450.4 500.9 454.8 499.9 457.5C498.9 460.2 500.2 462.4 501.0 464.0C501.8 465.6 503.4 466.4 504.8 467.3C506.2 468.2 508.9 469.0 509.7 469.3" fill="none" stroke="#58b4ea" stroke-width="1.5" stroke-linecap="round" stroke-linejoin="round"/>
<path d="M524.5 410.4C524.2 412.3 523.7 418.1 523.0 422.0C522.3 425.9 521.5 430.3 520.5 434.0C519.5 437.7 518.0 440.7 517.0 444.0C516.0 447.3 514.9 450.3 514.6 453.6C514.3 456.9 514.7 460.7 515.0 464.0C515.3 467.3 516.8 470.2 516.6 473.2C516.4 476.2 513.8 480.1 513.7 482.1C513.6 484.2 514.9 484.9 516.0 485.5C517.1 486.1 519.0 486.4 520.5 486.0C522.0 485.6 523.7 484.5 525.0 483.0C526.3 481.5 527.8 478.2 528.4 477.2" fill="none" stroke="#58b4ea" stroke-width="1.5" stroke-linecap="round" stroke-linejoin="round"/>
<path d="M534.3 414.3C534.0 416.6 533.1 423.8 532.5 428.0C531.9 432.2 531.3 436.3 530.4 439.8C529.5 443.3 528.1 446.1 527.0 449.0C525.9 451.9 523.9 454.1 523.5 457.5C523.1 460.9 524.3 467.3 524.5 469.3" fill="none" stroke="#58b4ea" stroke-width="1.5" stroke-linecap="round" stroke-linejoin="round"/>
<path d="M544.1 410.4C543.4 412.8 541.3 420.1 540.0 425.0C538.7 429.9 537.2 435.8 536.3 439.8C535.4 443.8 535.1 446.1 534.8 449.0C534.5 451.9 534.2 454.3 534.3 457.5C534.4 460.7 534.8 464.7 535.3 468.0C535.8 471.3 536.6 474.6 537.2 477.2C537.8 479.8 538.2 481.7 539.0 483.5C539.8 485.3 540.8 487.5 542.2 488.0C543.6 488.5 545.9 487.5 547.5 486.5C549.1 485.5 551.2 482.8 552.0 482.1" fill="none" stroke="#58b4ea" stroke-width="1.6" stroke-linecap="round" stroke-linejoin="round"/>
<path d="M552.0 414.3C551.4 416.4 549.5 422.8 548.5 427.0C547.5 431.2 546.4 436.0 546.1 439.8C545.8 443.6 546.2 446.7 546.5 450.0C546.8 453.3 546.8 456.3 548.0 459.5C549.2 462.7 552.1 466.9 553.9 469.3C555.6 471.7 556.9 472.5 558.5 473.8C560.1 475.1 560.9 477.3 563.8 477.2C566.6 477.1 573.6 473.9 575.6 473.2" fill="none" stroke="#58b4ea" stroke-width="1.7" stroke-linecap="round" stroke-linejoin="round"/>
<path d="M553.9 424.1C553.6 427.4 552.0 437.6 552.0 443.8C552.0 450.0 553.9 455.8 553.9 461.4C553.9 467.0 552.3 474.6 552.0 477.2" fill="none" stroke="#58b4ea" stroke-width="1.4" stroke-linecap="round" stroke-linejoin="round"/>
<path d="M528.0 440.0C527.0 443.0 522.2 453.0 522.0 458.0C521.8 463.0 525.0 466.2 527.0 470.0C529.0 473.8 532.8 479.2 534.0 481.0" fill="none" stroke="#4798d2" stroke-width="1.3" stroke-linecap="round" stroke-linejoin="round"/>
<path d="M540.0 440.0C540.5 443.0 541.7 452.7 543.0 458.0C544.3 463.3 545.8 468.2 548.0 472.0C550.2 475.8 554.7 479.5 556.0 481.0" fill="none" stroke="#4798d2" stroke-width="1.3" stroke-linecap="round" stroke-linejoin="round"/>
<polygon points="563.0,466.5 577.5,474.0 564.0,478.5 568.0,472.5" fill="#58b4ea"/>
<path d="M565.7 467.3C564.8 466.4 561.8 464.1 560.0 462.0C558.2 459.9 555.8 456.2 555.0 455.0" fill="none" stroke="#9bd8ff" stroke-width="1.2" stroke-linecap="round" stroke-linejoin="round"/>
<polygon points="523.5,470.0 529.5,474.0 524.5,480.5" fill="#58b4ea"/>
<polygon points="519.5,409.5 530.5,407.5 528.0,424.0 514.0,441.0 508.5,445.5 518.0,427.0" fill="#4798d2"/>
<path d="M530.0 408.0C529.6 410.7 530.2 418.4 527.5 424.0C524.8 429.6 516.7 437.9 513.5 441.5C510.3 445.1 509.3 444.8 508.5 445.5" fill="none" stroke="#9bd8ff" stroke-width="1.0" stroke-linecap="round" stroke-linejoin="round"/>
<polygon points="544.5,411.5 553.0,409.5 550.0,425.0 537.5,443.0 531.5,446.0 541.5,427.0" fill="#4798d2"/>
<path d="M553.0 410.0C552.4 412.5 552.2 419.4 549.5 425.0C546.8 430.6 540.0 440.0 537.0 443.5C534.0 447.0 532.4 445.6 531.5 446.0" fill="none" stroke="#9bd8ff" stroke-width="1.0" stroke-linecap="round" stroke-linejoin="round"/>
<polygon points="532.5,409.0 539.5,408.5 536.5,428.0 530.5,440.0 527.0,440.0 531.5,425.0" fill="#3a86c0"/>
<path d="M556.7 397.6C554.8 399.7 549.1 405.8 545.0 410.0C540.9 414.2 536.3 418.7 532.0 423.0C527.7 427.3 523.0 432.3 519.0 436.0C515.0 439.7 510.1 443.7 508.3 445.2" fill="none" stroke="#58b4ea" stroke-width="1.3" stroke-linecap="round" stroke-linejoin="round"/>
<polygon points="509.0,411.0 516.0,413.0 519.0,421.0 512.0,419.0" fill="#2f76ae"/>
<path d="M522.0 411.0C523.0 412.8 526.0 418.5 528.0 422.0C530.0 425.5 532.0 428.3 534.0 432.0C536.0 435.7 539.0 442.0 540.0 444.0" fill="none" stroke="#2c6ea3" stroke-width="4.4" stroke-linecap="round" stroke-linejoin="round"/>
<path d="M522.0 411.0C523.0 412.8 526.0 418.5 528.0 422.0C530.0 425.5 532.0 428.3 534.0 432.0C536.0 435.7 539.0 442.0 540.0 444.0" fill="none" stroke="#4798d2" stroke-width="3.4" stroke-linecap="round" stroke-linejoin="round"/>
<path d="M522.0 411.0C523.0 412.8 526.0 418.5 528.0 422.0C530.0 425.5 532.0 428.3 534.0 432.0C536.0 435.7 539.0 442.0 540.0 444.0" fill="none" stroke="#58b4ea" stroke-width="1.19" stroke-linecap="round" stroke-linejoin="round"/>
<path d="M530.0 408.0C530.7 410.0 532.3 416.0 534.0 420.0C535.7 424.0 538.0 427.7 540.0 432.0C542.0 436.3 545.0 443.7 546.0 446.0" fill="none" stroke="#2c6ea3" stroke-width="4.2" stroke-linecap="round" stroke-linejoin="round"/>
<path d="M530.0 408.0C530.7 410.0 532.3 416.0 534.0 420.0C535.7 424.0 538.0 427.7 540.0 432.0C542.0 436.3 545.0 443.7 546.0 446.0" fill="none" stroke="#58b4ea" stroke-width="3.2" stroke-linecap="round" stroke-linejoin="round"/>
<path d="M530.0 408.0C530.7 410.0 532.3 416.0 534.0 420.0C535.7 424.0 538.0 427.7 540.0 432.0C542.0 436.3 545.0 443.7 546.0 446.0" fill="none" stroke="#9bd8ff" stroke-width="1.1199999999999999" stroke-linecap="round" stroke-linejoin="round"/>
<path d="M546.0 406.0C545.0 408.0 542.2 414.0 540.0 418.0C537.8 422.0 535.3 426.0 533.0 430.0C530.7 434.0 527.2 440.0 526.0 442.0" fill="none" stroke="#2c6ea3" stroke-width="4.6" stroke-linecap="round" stroke-linejoin="round"/>
<path d="M546.0 406.0C545.0 408.0 542.2 414.0 540.0 418.0C537.8 422.0 535.3 426.0 533.0 430.0C530.7 434.0 527.2 440.0 526.0 442.0" fill="none" stroke="#58b4ea" stroke-width="3.6" stroke-linecap="round" stroke-linejoin="round"/>
<path d="M546.0 406.0C545.0 408.0 542.2 414.0 540.0 418.0C537.8 422.0 535.3 426.0 533.0 430.0C530.7 434.0 527.2 440.0 526.0 442.0" fill="none" stroke="#9bd8ff" stroke-width="1.26" stroke-linecap="round" stroke-linejoin="round"/>
<path d="M553.0 408.0C552.2 410.0 549.8 416.0 548.0 420.0C546.2 424.0 544.0 427.7 542.0 432.0C540.0 436.3 537.0 443.7 536.0 446.0" fill="none" stroke="#2c6ea3" stroke-width="4.2" stroke-linecap="round" stroke-linejoin="round"/>
<path d="M553.0 408.0C552.2 410.0 549.8 416.0 548.0 420.0C546.2 424.0 544.0 427.7 542.0 432.0C540.0 436.3 537.0 443.7 536.0 446.0" fill="none" stroke="#4798d2" stroke-width="3.2" stroke-linecap="round" stroke-linejoin="round"/>
<path d="M553.0 408.0C552.2 410.0 549.8 416.0 548.0 420.0C546.2 424.0 544.0 427.7 542.0 432.0C540.0 436.3 537.0 443.7 536.0 446.0" fill="none" stroke="#58b4ea" stroke-width="1.1199999999999999" stroke-linecap="round" stroke-linejoin="round"/>
<path d="M538.0 404.0C538.0 406.0 537.7 412.0 538.0 416.0C538.3 420.0 539.7 426.0 540.0 428.0" fill="none" stroke="#2c6ea3" stroke-width="3.6" stroke-linecap="round" stroke-linejoin="round"/>
<path d="M538.0 404.0C538.0 406.0 537.7 412.0 538.0 416.0C538.3 420.0 539.7 426.0 540.0 428.0" fill="none" stroke="#58b4ea" stroke-width="2.6" stroke-linecap="round" stroke-linejoin="round"/>
<path d="M538.0 404.0C538.0 406.0 537.7 412.0 538.0 416.0C538.3 420.0 539.7 426.0 540.0 428.0" fill="none" stroke="#9bd8ff" stroke-width="0.9099999999999999" stroke-linecap="round" stroke-linejoin="round"/>
<path d="M556.0 412.0C555.5 414.0 553.8 420.0 553.0 424.0C552.2 428.0 551.3 434.0 551.0 436.0" fill="none" stroke="#2c6ea3" stroke-width="3.6" stroke-linecap="round" stroke-linejoin="round"/>
<path d="M556.0 412.0C555.5 414.0 553.8 420.0 553.0 424.0C552.2 428.0 551.3 434.0 551.0 436.0" fill="none" stroke="#58b4ea" stroke-width="2.6" stroke-linecap="round" stroke-linejoin="round"/>
<path d="M556.0 412.0C555.5 414.0 553.8 420.0 553.0 424.0C552.2 428.0 551.3 434.0 551.0 436.0" fill="none" stroke="#9bd8ff" stroke-width="0.9099999999999999" stroke-linecap="round" stroke-linejoin="round"/>
<path d="M518.0 416.0C518.8 417.7 521.7 422.3 523.0 426.0C524.3 429.7 525.5 436.0 526.0 438.0" fill="none" stroke="#2c6ea3" stroke-width="3.4" stroke-linecap="round" stroke-linejoin="round"/>
<path d="M518.0 416.0C518.8 417.7 521.7 422.3 523.0 426.0C524.3 429.7 525.5 436.0 526.0 438.0" fill="none" stroke="#58b4ea" stroke-width="2.4" stroke-linecap="round" stroke-linejoin="round"/>
<path d="M518.0 416.0C518.8 417.7 521.7 422.3 523.0 426.0C524.3 429.7 525.5 436.0 526.0 438.0" fill="none" stroke="#4798d2" stroke-width="0.84" stroke-linecap="round" stroke-linejoin="round"/>
<path d="M537.6 385.7C537.2 387.4 536.1 392.6 535.0 396.0C533.9 399.4 531.7 404.3 531.0 406.0" fill="none" stroke="#58b4ea" stroke-width="2.0" stroke-linecap="round" stroke-linejoin="round"/>
<path d="M544.7 388.0C544.8 389.7 544.8 395.0 545.0 398.0C545.2 401.0 545.8 404.7 546.0 406.0" fill="none" stroke="#58b4ea" stroke-width="2.0" stroke-linecap="round" stroke-linejoin="round"/>
<path d="M551.8 397.6C551.8 398.7 551.8 402.3 552.0 404.0C552.2 405.7 552.8 407.3 553.0 408.0" fill="none" stroke="#58b4ea" stroke-width="2.0" stroke-linecap="round" stroke-linejoin="round"/>
<path d="M536.0 444.0C535.5 446.0 534.0 452.0 533.0 456.0C532.0 460.0 530.5 466.0 530.0 468.0" fill="none" stroke="#d8ecf8" stroke-width="1.0" stroke-linecap="round" stroke-linejoin="round"/>
<path d="M543.0 420.0C542.5 421.7 540.8 426.7 540.0 430.0C539.2 433.3 538.3 438.3 538.0 440.0" fill="none" stroke="#e4f2fb" stroke-width="0.9" stroke-linecap="round" stroke-linejoin="round"/>
<path d="M504.8 406.4C505.2 406.0 506.5 404.7 507.5 404.2C508.5 403.7 509.6 403.4 510.7 403.5C511.8 403.6 513.0 404.2 514.0 404.8C515.0 405.4 515.8 405.8 516.6 407.4C517.4 409.0 518.7 412.5 518.6 414.3C518.5 416.1 517.0 417.0 516.0 418.0C515.0 419.0 513.7 420.2 512.7 420.2C511.7 420.2 510.6 419.0 510.0 418.0C509.4 417.0 509.0 414.9 508.8 414.3" fill="none" stroke="#58b4ea" stroke-width="1.6" stroke-linecap="round" stroke-linejoin="round"/>
<path d="M510.0 408.5C510.7 409.2 512.5 411.6 514.0 413.0C515.5 414.4 517.3 416.0 519.0 417.0C520.7 418.0 523.2 418.7 524.0 419.0" fill="none" stroke="#2c6ea3" stroke-width="4.0" stroke-linecap="round" stroke-linejoin="round"/>
<path d="M510.0 408.5C510.7 409.2 512.5 411.6 514.0 413.0C515.5 414.4 517.3 416.0 519.0 417.0C520.7 418.0 523.2 418.7 524.0 419.0" fill="none" stroke="#58b4ea" stroke-width="3.0" stroke-linecap="round" stroke-linejoin="round"/>
<path d="M510.0 408.5C510.7 409.2 512.5 411.6 514.0 413.0C515.5 414.4 517.3 416.0 519.0 417.0C520.7 418.0 523.2 418.7 524.0 419.0" fill="none" stroke="#9bd8ff" stroke-width="1.0499999999999998" stroke-linecap="round" stroke-linejoin="round"/>
<path d="M504.8 406.4C505.0 407.1 505.3 410.1 506.0 410.5C506.7 410.9 508.5 409.2 509.0 409.0" fill="none" stroke="#9bd8ff" stroke-width="1.2" stroke-linecap="round" stroke-linejoin="round"/>
<path d="M508.0 462.0C508.3 463.0 510.2 466.3 510.0 468.0C509.8 469.7 507.5 471.3 507.0 472.0" fill="none" stroke="#58b4ea" stroke-width="1.2" stroke-linecap="round" stroke-linejoin="round"/>
</g></svg>

<!-- text -->
<span class="t" style="left:311.9px;top:8.1px;font-size:14px;color:#8c8c8c;transform:scaleX(0.925)">UCSF Chimera</span>
<span class="t" style="left:874.4px;top:27.1px;font-size:14px;color:#3a3a3a;transform:scaleX(0.974)">Model Panel</span>
<span class="t" style="left:8.2px;top:29.1px;font-size:14px;color:#000;transform:scaleX(0.944)">File</span>
<span class="t" style="left:41.4px;top:29.1px;font-size:14px;color:#000;transform:scaleX(0.945)">Select</span>
<span class="t" style="left:90.7px;top:29.1px;font-size:14px;color:#000;transform:scaleX(1.013)">Actions</span>
<span class="t" style="left:149.4px;top:29.1px;font-size:14px;color:#000;transform:scaleX(0.940)">Presets</span>
<span class="t" style="left:207.4px;top:29.1px;font-size:14px;color:#000;transform:scaleX(1.013)">Volume</span>
<span class="t" style="left:266.9px;top:29.1px;font-size:14px;color:#000;transform:scaleX(1.059)">Tools</span>
<span class="t" style="left:314.4px;top:29.1px;font-size:14px;color:#000;transform:scaleX(0.978)">Favorites</span>
<span class="t" style="left:383.2px;top:29.1px;font-size:14px;color:#000;transform:scaleX(0.975)">Aliases</span>
<span class="t" style="left:514.4px;top:29.1px;font-size:14px;color:#000;transform:scaleX(0.983)">Help</span>
<span class="t" style="left:7.1px;top:533.1px;font-size:14px;color:#000;transform:scaleX(0.993)">Command:</span>
<span class="t" style="left:80.8px;top:533.1px;font-size:14px;color:#000;transform:scaleX(0.960)">mda Q0PF16</span>
<span class="t" style="left:7.1px;top:557.1px;font-size:14px;color:#000;transform:scaleX(1.009)">Active models:</span>
<span class="t" style="left:129.2px;top:557.1px;font-size:14px;color:#000;transform:scaleX(1.026)">0</span>
<span class="t" style="left:165.0px;top:557.1px;font-size:14px;color:#000;transform:scaleX(0.872)">1</span>
<span class="t" style="left:199.2px;top:557.1px;font-size:14px;color:#000;transform:scaleX(1.026)">2</span>
<span class="t" style="left:234.2px;top:557.1px;font-size:14px;color:#000;transform:scaleX(1.026)">3</span>
<span class="t" style="left:269.2px;top:557.1px;font-size:14px;color:#000;transform:scaleX(1.026)">4</span>
<span class="t" style="left:304.2px;top:557.1px;font-size:14px;color:#000;transform:scaleX(1.026)">5</span>
<span class="t" style="left:339.2px;top:557.1px;font-size:14px;color:#000;transform:scaleX(1.026)">6</span>
<span class="t" style="left:374.2px;top:557.1px;font-size:14px;color:#000;transform:scaleX(1.026)">7</span>
<span class="t" style="left:409.2px;top:557.1px;font-size:14px;color:#000;transform:scaleX(1.026)">8</span>
<span class="t" style="left:444.2px;top:557.1px;font-size:14px;color:#000;transform:scaleX(1.026)">9</span>
<span class="t" style="left:479.1px;top:557.1px;font-size:14px;color:#000;transform:scaleX(1.086)">All</span>
<span class="t" style="left:9.9px;top:584.1px;font-size:14px;color:#000;transform:scaleX(1.013)">Control "missing segments" pseudobonds with Pseudobond Panel (in Tools...General Controls</span>
<span class="t" style="left:718.7px;top:54.1px;font-size:14px;color:#000;transform:scaleX(0.964)">ID</span>
<span class="t" style="left:772.7px;top:54.1px;font-size:14px;color:#000;transform:scaleX(1.017)">A</span>
<span class="t" style="left:795.9px;top:54.1px;font-size:14px;color:#000;transform:scaleX(0.738)">S</span>
<span class="t" style="left:819.2px;top:54.1px;font-size:14px;color:#000;transform:scaleX(0.942)">Name</span>
<span class="t" style="left:717.2px;top:79.1px;font-size:14px;color:#000;transform:scaleX(0.996)">0.1</span>
<span class="t" style="left:817.0px;top:79.1px;font-size:14px;color:#000;transform:scaleX(0.857)">2EGP</span>
<span class="t" style="left:718.2px;top:104.1px;font-size:14px;color:#000;transform:scaleX(0.945)">1.1</span>
<span class="t" style="left:817.0px;top:104.1px;font-size:14px;color:#000;transform:scaleX(0.821)">2ECJ</span>
<span class="t" style="left:717.2px;top:129.1px;font-size:14px;color:#000;transform:scaleX(0.996)">2.1</span>
<span class="t" style="left:817.0px;top:129.1px;font-size:14px;color:#000;transform:scaleX(0.880)">2ECV</span>
<span class="t" style="left:717.2px;top:154.1px;font-size:14px;color:#000;transform:scaleX(0.996)">3.1</span>
<span class="t" style="left:817.0px;top:154.1px;font-size:14px;color:#000;transform:scaleX(0.855)">2ECW</span>
<span class="t" style="left:717.2px;top:179.1px;font-size:14px;color:#000;transform:scaleX(0.996)">4.1</span>
<span class="t" style="left:817.0px;top:179.1px;font-size:14px;color:#000;transform:scaleX(0.873)">2YSL</span>
<span class="t" style="left:717.2px;top:204.1px;font-size:14px;color:#000;transform:scaleX(0.996)">5.1</span>
<span class="t" style="left:817.0px;top:204.1px;font-size:14px;color:#000;transform:scaleX(0.819)">2YSJ</span>
<span class="t" style="left:717.2px;top:229.1px;font-size:14px;color:#000;transform:scaleX(0.996)">6.1</span>
<span class="t" style="left:818.2px;top:229.1px;font-size:14px;color:#000;transform:scaleX(0.873)">1JM7</span>
<span class="t" style="left:717.2px;top:254.1px;font-size:14px;color:#000;transform:scaleX(0.996)">7.1</span>
<span class="t" style="left:817.0px;top:254.1px;font-size:14px;color:#000;transform:scaleX(0.876)">2YRG</span>
<span class="t" style="left:717.2px;top:279.1px;font-size:14px;color:#000;transform:scaleX(1.000)">8</span>
<span class="t" style="left:817.0px;top:279.1px;font-size:14px;color:#000;transform:scaleX(0.933)">4B3N</span>
<span class="t" style="left:717.2px;top:304.1px;font-size:14px;color:#000;transform:scaleX(0.996)">9.1</span>
<span class="t" style="left:817.0px;top:304.1px;font-size:14px;color:#000;transform:scaleX(1.005)">2LM3</span>
<span class="t" style="left:718.2px;top:329.1px;font-size:14px;color:#000;transform:scaleX(0.918)">10</span>
<span class="t" style="left:817.0px;top:329.1px;font-size:14px;color:#000;transform:scaleX(0.962)">3UV9</span>
<span class="t" style="left:718.2px;top:354.1px;font-size:14px;color:#000;transform:scaleX(0.983)">11</span>
<span class="t" style="left:817.0px;top:354.1px;font-size:14px;color:#000;transform:scaleX(0.894)">2IWG</span>
<span class="t" style="left:718.2px;top:379.1px;font-size:14px;color:#000;transform:scaleX(0.918)">12</span>
<span class="t" style="left:817.0px;top:379.1px;font-size:14px;color:#000;transform:scaleX(0.968)">3ZO0</span>
<span class="t" style="left:718.2px;top:404.1px;font-size:14px;color:#000;transform:scaleX(0.918)">13</span>
<span class="t" style="left:817.0px;top:404.1px;font-size:14px;color:#000;transform:scaleX(0.940)">2VOK</span>
<span class="t" style="left:718.2px;top:429.1px;font-size:14px;color:#000;transform:scaleX(0.918)">14</span>
<span class="t" style="left:817.0px;top:429.1px;font-size:14px;color:#000;transform:scaleX(0.923)">3KB5</span>
<span class="t" style="left:718.2px;top:454.1px;font-size:14px;color:#000;transform:scaleX(0.918)">15</span>
<span class="t" style="left:817.0px;top:454.1px;font-size:14px;color:#000;transform:scaleX(0.913)">2WL1</span>
<span class="t" style="left:718.2px;top:479.1px;font-size:14px;color:#000;transform:scaleX(0.918)">16</span>
<span class="t" style="left:817.0px;top:479.1px;font-size:14px;color:#000;transform:scaleX(0.848)">2FBE</span>
<span class="t" style="left:718.2px;top:504.1px;font-size:14px;color:#000;transform:scaleX(0.944)">1001</span>
<span class="t" style="left:817.0px;top:504.1px;font-size:14px;color:#000;transform:scaleX(1.001)">Gap of 5 residues</span>
<span class="t" style="left:718.2px;top:529.1px;font-size:14px;color:#000;transform:scaleX(0.944)">1002</span>
<span class="t" style="left:817.0px;top:529.1px;font-size:14px;color:#000;transform:scaleX(1.004)">Gap of 73 residues</span>
<span class="t" style="left:1004.2px;top:51.1px;font-size:14px;color:#000;transform:scaleX(1.031)">activate all</span>
<span class="t" style="left:998.0px;top:73.1px;font-size:14px;color:#000;transform:scaleX(1.034)">activate only</span>
<span class="t" style="left:993.4px;top:95.1px;font-size:14px;color:#000;transform:scaleX(1.058)">biological unit</span>
<span class="t" style="left:1022.2px;top:117.1px;font-size:14px;color:#000;transform:scaleX(0.985)">close</span>
<span class="t" style="left:1001.5px;top:139.1px;font-size:14px;color:#000;transform:scaleX(0.965)">compute SS</span>
<span class="t" style="left:987.1px;top:161.1px;font-size:14px;color:#000;transform:scaleX(1.043)">copy/combine...</span>
<span class="t" style="left:989.0px;top:183.1px;font-size:14px;color:#000;transform:scaleX(1.081)">group/ungroup</span>
<span class="t" style="left:1024.9px;top:205.1px;font-size:14px;color:#000;transform:scaleX(1.013)">hide</span>
<span class="t" style="left:1008.6px;top:227.1px;font-size:14px;color:#000;transform:scaleX(1.003)">rename...</span>
<span class="t" style="left:1020.7px;top:249.1px;font-size:14px;color:#000;transform:scaleX(0.962)">select</span>
<span class="t" style="left:1021.9px;top:271.1px;font-size:14px;color:#000;transform:scaleX(1.003)">show</span>
<span class="t" style="left:1006.6px;top:293.1px;font-size:14px;color:#000;transform:scaleX(1.017)">show only</span>
<span class="t" style="left:996.7px;top:538.1px;font-size:14px;color:#000;transform:scaleX(1.028)">favorites</span>
<span class="t" style="left:1090.0px;top:538.1px;font-size:14px;color:#000;transform:scaleX(1.013)">all</span>
<span class="t" style="left:885.0px;top:572.1px;font-size:14px;color:#000;transform:scaleX(1.022)">Configure...</span>
<span class="t" style="left:989.6px;top:572.1px;font-size:14px;color:#000;transform:scaleX(0.989)">Close</span>
<span class="t" style="left:1054.4px;top:572.1px;font-size:14px;color:#000;transform:scaleX(1.021)">Help</span>
</body></html>
